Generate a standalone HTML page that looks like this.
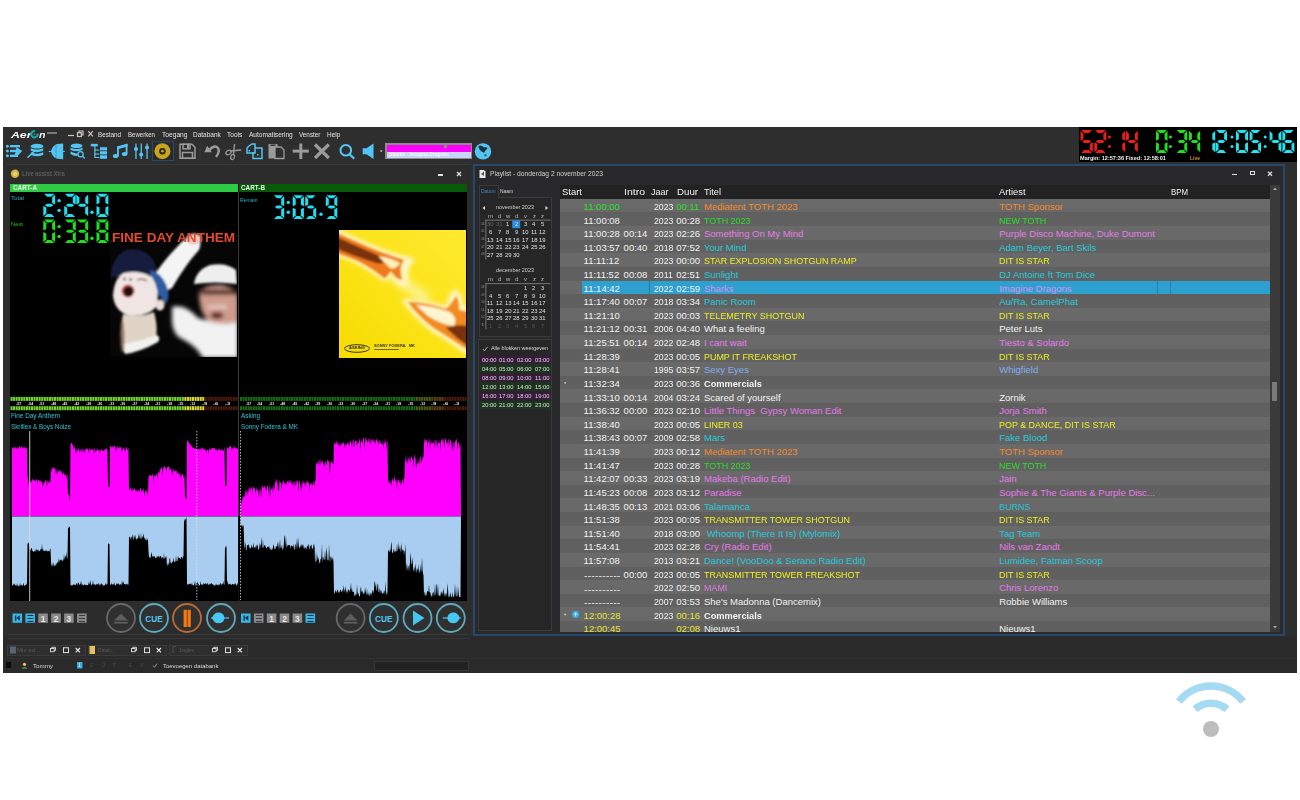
<!DOCTYPE html>
<html><head><meta charset="utf-8"><title>Aeron</title>
<style>
*{margin:0;padding:0;box-sizing:border-box}
html,body{width:1300px;height:800px;background:#fff;overflow:hidden;font-family:"Liberation Sans", sans-serif}
.a{position:absolute}
.t{position:absolute;white-space:pre;line-height:1}
svg{position:absolute;overflow:visible}
</style></head><body>

<div class="a" style="left:2.5px;top:127px;width:1294.5px;height:546px;background:#2e2e2e"></div>
<div class="t" style="left:10.50px;top:129.67px;font-size:9.60px;color:#f4f4f4;font-weight:bold;font-style:italic;transform:scaleX(1.2806);transform-origin:0 0;">Aer</div>
<svg style="left:0;top:0" width="1" height="1"><path d="M37.65 133.64 A3.2 3.2 0 1 1 35.06 131.05" fill="none" stroke="#1aa5a0" stroke-width="2.1"/><circle cx="34.5" cy="134.2" r="0.9" fill="#1aa5a0"/></svg>
<div class="t" style="left:38.60px;top:130.17px;font-size:9.60px;color:#f4f4f4;font-weight:bold;font-style:italic;transform:scaleX(1.1084);transform-origin:0 0;">n</div>
<div class="a" style="left:46.5px;top:132.2px;width:10.5px;height:2px;background:#777"></div>
<svg style="left:0;top:0" width="1" height="1"><g stroke="#c8c8c8" stroke-width="1.2" fill="none"><line x1="68" y1="135.5" x2="74" y2="135.5"/><rect x="77.5" y="132.7" width="3.8" height="3.8"/><polyline points="79,132.5 79,131 83,131 83,135 81.5,135"/><line x1="88.2" y1="131.2" x2="92.8" y2="136.3"/><line x1="92.8" y1="131.2" x2="88.2" y2="136.3"/></g></svg>
<div class="t" style="left:97.70px;top:130.69px;font-size:7.50px;color:#e2e2e2;transform:scaleX(0.8394);transform-origin:0 0;">Bestand</div>
<div class="t" style="left:127.70px;top:130.69px;font-size:7.50px;color:#e2e2e2;transform:scaleX(0.8066);transform-origin:0 0;">Bewerken</div>
<div class="t" style="left:161.50px;top:130.69px;font-size:7.50px;color:#e2e2e2;transform:scaleX(0.8861);transform-origin:0 0;">Toegang</div>
<div class="t" style="left:192.80px;top:130.69px;font-size:7.50px;color:#e2e2e2;transform:scaleX(0.8659);transform-origin:0 0;">Databank</div>
<div class="t" style="left:226.80px;top:130.69px;font-size:7.50px;color:#e2e2e2;transform:scaleX(0.8681);transform-origin:0 0;">Tools</div>
<div class="t" style="left:249.00px;top:130.69px;font-size:7.50px;color:#e2e2e2;transform:scaleX(0.8736);transform-origin:0 0;">Automatisering</div>
<div class="t" style="left:299.40px;top:130.69px;font-size:7.50px;color:#e2e2e2;transform:scaleX(0.8414);transform-origin:0 0;">Venster</div>
<div class="t" style="left:327.20px;top:130.69px;font-size:7.50px;color:#e2e2e2;transform:scaleX(0.8622);transform-origin:0 0;">Help</div>
<svg style="left:0;top:0" width="1" height="1"><g fill="#52c5f2"><circle cx="7.4" cy="146.2" r="1.5"/><rect x="10" y="145.0" width="10.0" height="2.4"/><circle cx="7.4" cy="151.0" r="1.5"/><rect x="10" y="149.8" width="9.0" height="2.4"/><circle cx="7.4" cy="155.8" r="1.5"/><rect x="10" y="154.6" width="8.0" height="2.4"/><path d="M16.5 147.3 L22.3 151 L16.5 157 L14.8 157 L14.8 155 Z"/></g><g fill="#52c5f2"><ellipse cx="37" cy="146.2" rx="6.2" ry="2.4"/><path d="M30.8 148.2 Q37 151 43.2 148.2 L43.2 150.8 Q37 153.6 30.8 150.8Z"/><path d="M30.8 152.3 Q37 155.1 43.2 152.3 L43.2 154.9 Q37 157.7 30.8 154.9Z"/></g><line x1="27.5" y1="157.8" x2="35" y2="150.5" stroke="#52c5f2" stroke-width="1.6"/><g fill="#52c5f2"><path d="M51 151.4 Q52.5 145.5 57 144 L63.2 143.6 L63.2 159.3 L57 158.8 Q52.5 157.3 51 151.4Z"/><rect x="48.7" y="150.9" width="16.2" height="1"/></g><rect x="55.6" y="145" width="0.8" height="13" fill="#2a6a8a" opacity="0.6"/><g fill="#52c5f2"><ellipse cx="76.5" cy="145.8" rx="6" ry="2.3"/><path d="M70.5 147.7 Q76.5 150.3 82.5 147.7 L82.5 150 Q76.5 152.6 70.5 150Z"/><path d="M70.5 151.5 Q76 154 78 153.5 L77.5 156 Q74 156.5 70.5 154Z"/></g><circle cx="80.6" cy="154.3" r="2.6" fill="none" stroke="#52c5f2" stroke-width="1.3"/><line x1="82.5" y1="156.2" x2="84.8" y2="158.5" stroke="#52c5f2" stroke-width="1.3"/><g fill="#52c5f2"><rect x="90.8" y="143.8" width="7" height="2.6"/><rect x="94.3" y="146" width="1.2" height="11"/><rect x="94.3" y="149.5" width="5" height="1.1"/><rect x="94.3" y="153.5" width="5" height="1.1"/><rect x="94.3" y="156.9" width="5" height="1.1"/><rect x="100" y="147.2" width="7" height="3.2"/><rect x="100" y="151.2" width="7" height="3.2"/><rect x="100" y="155.2" width="7" height="3.6"/></g><g fill="#52c5f2"><ellipse cx="115.6" cy="156" rx="2.8" ry="2.1"/><ellipse cx="124.6" cy="154" rx="2.8" ry="2.1"/><rect x="117" y="146.5" width="1.9" height="10"/><rect x="125.6" y="144" width="1.9" height="10"/><path d="M117 146.5 L127.5 143.5 L127.5 146.5 L117 149.5Z"/></g><g fill="#52c5f2"><rect x="135.3" y="143.5" width="1.3" height="15.5"/><rect x="140.6" y="143.5" width="1.3" height="15.5"/><rect x="146.4" y="143.5" width="1.3" height="15.5"/><circle cx="136" cy="149" r="2"/><circle cx="141.2" cy="154.5" r="2"/><circle cx="147" cy="147.5" r="2"/></g><rect x="152.5" y="141.7" width="21" height="18.8" fill="#262a2e" stroke="#2c4a62" stroke-width="1"/><circle cx="162.4" cy="151.2" r="8" fill="#c9a21f"/><circle cx="162.4" cy="151.2" r="3.2" fill="#2a2410"/><circle cx="162.4" cy="151.2" r="1.4" fill="#c9a21f"/><g fill="none" stroke="#9b9b9b" stroke-width="1.5"><path d="M180 144.3 H192 L195 147.3 V158.3 H180 Z"/><rect x="183" y="144.3" width="7" height="4.5"/><rect x="182.5" y="152.5" width="10" height="5.8"/></g><rect x="187" y="145" width="2" height="3" fill="#9b9b9b"/><rect x="199.5" y="143" width="1" height="17" fill="#3a3a3a"/><path d="M209 150.5 Q213 145 217 147 Q221 150 216 157" fill="none" stroke="#9b9b9b" stroke-width="2.4"/><path d="M204.3 152.2 L207.2 145.7 L211.8 152.2 Z" fill="#9b9b9b"/><g fill="none" stroke="#9b9b9b" stroke-width="1.3"><ellipse cx="228.5" cy="152.5" rx="2.8" ry="2" transform="rotate(-30 228.5 152.5)"/><ellipse cx="232.6" cy="157" rx="1.8" ry="2.6" transform="rotate(20 232.6 157)"/><line x1="230.8" y1="151" x2="241" y2="150"/><line x1="233.5" y1="154.5" x2="234.5" y2="144"/></g><g fill="none" stroke="#52c5f2" stroke-width="1.5"><path d="M249 146 L252 144 H255 V153 H247 V148 Z"/><path d="M255 148 H262 V158.5 H253 V152"/></g><rect x="248.5" y="150" width="1.5" height="1.5" fill="#52c5f2"/><rect x="257" y="154" width="1.5" height="1.5" fill="#52c5f2"/><g fill="#9b9b9b"><rect x="268.5" y="144" width="9" height="14.5"/></g><path d="M275 147 H281 L284 150 V158.5 H275 Z" fill="#2e2e2e" stroke="#9b9b9b" stroke-width="1.3"/><rect x="270.5" y="144.5" width="5" height="1.4" fill="#2e2e2e"/><rect x="292.7" y="149.6" width="16.1" height="3" fill="#9b9b9b"/><rect x="299.3" y="143.5" width="3" height="15.5" fill="#9b9b9b"/><g stroke="#9b9b9b" stroke-width="3.2"><line x1="315" y1="144.5" x2="328.8" y2="158"/><line x1="328.8" y1="144.5" x2="315" y2="158"/></g><circle cx="345.8" cy="150.3" r="5.3" fill="none" stroke="#52c5f2" stroke-width="2"/><line x1="349.5" y1="154.2" x2="354.2" y2="158.6" stroke="#52c5f2" stroke-width="2.2"/><path d="M362.7 148.3 H366.5 L373.5 143.5 V159 L366.5 154.2 H362.7 Z" fill="#52c5f2"/><path d="M379.8 150.6 H382.6 L381.2 152.3Z" fill="#ddd"/></svg>
<div class="a" style="left:385px;top:143px;width:87px;height:15.8px;background:#8c8c8c"></div>
<div class="a" style="left:386.5px;top:144.5px;width:84px;height:7.5px;background:#ff00ff"></div>
<div class="a" style="left:444.2px;top:144.5px;width:3.3px;height:3.5px;background:#8c8c8c"></div>
<div class="a" style="left:386.5px;top:152px;width:84px;height:5.5px;background:#c8d4f8"></div>
<div class="t" style="left:388.50px;top:152.20px;font-size:5.60px;color:#f4f8ff;font-weight:bold;transform:scaleX(0.8685);transform-origin:0 0;">Sharks - Imagine Dragons</div>
<svg style="left:0;top:0" width="1" height="1"><circle cx="483" cy="151.4" r="8.2" fill="#52c5f2"/><path d="M478.5 146 Q481 144.5 484 147.5 Q486.5 146 487.5 148.5 L485 151 Q484.5 154 482.5 152 Q479 150.5 478.5 146Z" fill="#1f3040"/><circle cx="485.5" cy="155.2" r="1" fill="#1f3040"/></svg>
<div class="a" style="left:1079px;top:127px;width:218px;height:35px;background:#000"></div>
<svg style="left:0;top:0" width="1" height="1"><g fill="#ee1c1c"><polygon points="1081.25,130.00 1092.05,130.00 1089.15,132.90 1084.15,132.90"/><polygon points="1080.50,130.75 1083.40,133.65 1083.40,139.30 1080.50,140.75"/><polygon points="1082.12,141.50 1084.15,140.05 1089.15,140.05 1091.18,141.50 1089.15,142.95 1084.15,142.95"/><polygon points="1092.80,142.25 1089.90,143.70 1089.90,149.35 1092.80,152.25"/><polygon points="1084.15,150.10 1089.15,150.10 1092.05,153.00 1081.25,153.00"/><polygon points="1095.05,130.00 1105.55,130.00 1102.65,132.90 1097.95,132.90"/><polygon points="1106.30,130.75 1103.40,133.65 1103.40,139.30 1106.30,140.75"/><polygon points="1095.92,141.50 1097.95,140.05 1102.65,140.05 1104.68,141.50 1102.65,142.95 1097.95,142.95"/><polygon points="1094.30,142.25 1097.20,143.70 1097.20,149.35 1094.30,152.25"/><polygon points="1097.95,150.10 1102.65,150.10 1105.55,153.00 1095.05,153.00"/><circle cx="1109.50" cy="136.90" r="1.50"/><circle cx="1109.50" cy="146.56" r="1.50"/><polygon points="1125.20,130.75 1122.30,133.65 1122.30,139.30 1125.20,140.75"/><polygon points="1125.20,142.25 1122.30,143.70 1122.30,149.35 1125.20,152.25"/><polygon points="1126.00,130.75 1128.90,133.65 1128.90,139.30 1126.00,140.75"/><polygon points="1127.62,141.50 1129.65,140.05 1134.15,140.05 1136.18,141.50 1134.15,142.95 1129.65,142.95"/><polygon points="1137.80,130.75 1134.90,133.65 1134.90,139.30 1137.80,140.75"/><polygon points="1137.80,142.25 1134.90,143.70 1134.90,149.35 1137.80,152.25"/></g><g fill="#1fe01f"><polygon points="1156.75,130.00 1166.75,130.00 1163.85,132.90 1159.65,132.90"/><polygon points="1167.50,130.75 1164.60,133.65 1164.60,139.30 1167.50,140.75"/><polygon points="1167.50,142.25 1164.60,143.70 1164.60,149.35 1167.50,152.25"/><polygon points="1159.65,150.10 1163.85,150.10 1166.75,153.00 1156.75,153.00"/><polygon points="1156.00,142.25 1158.90,143.70 1158.90,149.35 1156.00,152.25"/><polygon points="1156.00,130.75 1158.90,133.65 1158.90,139.30 1156.00,140.75"/><circle cx="1170.50" cy="136.90" r="1.50"/><circle cx="1170.50" cy="146.56" r="1.50"/><polygon points="1176.75,130.00 1186.45,130.00 1183.55,132.90 1179.65,132.90"/><polygon points="1187.20,130.75 1184.30,133.65 1184.30,139.30 1187.20,140.75"/><polygon points="1177.62,141.50 1179.65,140.05 1183.55,140.05 1185.58,141.50 1183.55,142.95 1179.65,142.95"/><polygon points="1187.20,142.25 1184.30,143.70 1184.30,149.35 1187.20,152.25"/><polygon points="1179.65,150.10 1183.55,150.10 1186.45,153.00 1176.75,153.00"/><polygon points="1189.00,130.75 1191.90,133.65 1191.90,139.30 1189.00,140.75"/><polygon points="1190.62,141.50 1192.65,140.05 1196.55,140.05 1198.58,141.50 1196.55,142.95 1192.65,142.95"/><polygon points="1200.20,130.75 1197.30,133.65 1197.30,139.30 1200.20,140.75"/><polygon points="1200.20,142.25 1197.30,143.70 1197.30,149.35 1200.20,152.25"/></g><g fill="#22e4ee"><polygon points="1215.20,130.75 1212.30,133.65 1212.30,139.30 1215.20,140.75"/><polygon points="1215.20,142.25 1212.30,143.70 1212.30,149.35 1215.20,152.25"/><polygon points="1216.35,130.00 1226.25,130.00 1223.35,132.90 1219.25,132.90"/><polygon points="1227.00,130.75 1224.10,133.65 1224.10,139.30 1227.00,140.75"/><polygon points="1217.22,141.50 1219.25,140.05 1223.35,140.05 1225.38,141.50 1223.35,142.95 1219.25,142.95"/><polygon points="1215.60,142.25 1218.50,143.70 1218.50,149.35 1215.60,152.25"/><polygon points="1219.25,150.10 1223.35,150.10 1226.25,153.00 1216.35,153.00"/><circle cx="1232.00" cy="136.90" r="1.50"/><circle cx="1232.00" cy="146.56" r="1.50"/><polygon points="1236.75,130.00 1247.25,130.00 1244.35,132.90 1239.65,132.90"/><polygon points="1248.00,130.75 1245.10,133.65 1245.10,139.30 1248.00,140.75"/><polygon points="1248.00,142.25 1245.10,143.70 1245.10,149.35 1248.00,152.25"/><polygon points="1239.65,150.10 1244.35,150.10 1247.25,153.00 1236.75,153.00"/><polygon points="1236.00,142.25 1238.90,143.70 1238.90,149.35 1236.00,152.25"/><polygon points="1236.00,130.75 1238.90,133.65 1238.90,139.30 1236.00,140.75"/><polygon points="1250.35,130.00 1260.25,130.00 1257.35,132.90 1253.25,132.90"/><polygon points="1249.60,130.75 1252.50,133.65 1252.50,139.30 1249.60,140.75"/><polygon points="1251.22,141.50 1253.25,140.05 1257.35,140.05 1259.38,141.50 1257.35,142.95 1253.25,142.95"/><polygon points="1261.00,142.25 1258.10,143.70 1258.10,149.35 1261.00,152.25"/><polygon points="1253.25,150.10 1257.35,150.10 1260.25,153.00 1250.35,153.00"/><circle cx="1265.20" cy="136.90" r="1.50"/><circle cx="1265.20" cy="146.56" r="1.50"/><polygon points="1269.60,130.75 1272.50,133.65 1272.50,139.30 1269.60,140.75"/><polygon points="1271.22,141.50 1273.25,140.05 1277.75,140.05 1279.78,141.50 1277.75,142.95 1273.25,142.95"/><polygon points="1281.40,130.75 1278.50,133.65 1278.50,139.30 1281.40,140.75"/><polygon points="1281.40,142.25 1278.50,143.70 1278.50,149.35 1281.40,152.25"/><polygon points="1283.15,130.00 1293.65,130.00 1290.75,132.90 1286.05,132.90"/><polygon points="1282.40,130.75 1285.30,133.65 1285.30,139.30 1282.40,140.75"/><polygon points="1284.02,141.50 1286.05,140.05 1290.75,140.05 1292.78,141.50 1290.75,142.95 1286.05,142.95"/><polygon points="1282.40,142.25 1285.30,143.70 1285.30,149.35 1282.40,152.25"/><polygon points="1294.40,142.25 1291.50,143.70 1291.50,149.35 1294.40,152.25"/><polygon points="1286.05,150.10 1290.75,150.10 1293.65,153.00 1283.15,153.00"/></g></svg>
<div class="t" style="left:1080.00px;top:156.30px;font-size:5.60px;color:#f0f0f0;font-weight:bold;transform:scaleX(0.9975);transform-origin:0 0;">Margin: 12:57:36 Fixed: 12:58:01</div>
<div class="t" style="left:1190.00px;top:156.30px;font-size:5.60px;color:#d09030;font-weight:bold;transform:scaleX(0.8924);transform-origin:0 0;">Live</div>
<div class="a" style="left:7px;top:165px;width:464px;height:475px;background:#2c2c2c"></div>
<div class="a" style="left:7px;top:164.2px;width:464px;height:1px;background:#3a3a3a"></div>
<svg style="left:0;top:0" width="1" height="1"><circle cx="15" cy="173.7" r="4.2" fill="#d4b040"/><circle cx="15" cy="173.7" r="2.2" fill="#e8d070"/></svg>
<div class="t" style="left:21.80px;top:169.94px;font-size:8.00px;color:#5c5c5c;font-weight:bold;transform:scaleX(0.7291);transform-origin:0 0;">Live assist Xtra</div>
<div class="a" style="left:438px;top:174px;width:4.5px;height:1.8px;background:#e0e0e0"></div>
<svg style="left:0;top:0" width="1" height="1"><g stroke="#dcdcdc" stroke-width="1.3"><line x1="457" y1="172" x2="461" y2="176"/><line x1="461" y1="172" x2="457" y2="176"/></g></svg>
<div class="a" style="left:10px;top:184px;width:457px;height:417px;background:#000"></div>
<div class="a" style="left:238px;top:192px;width:1px;height:409px;background:#3c3c3c"></div>
<div class="a" style="left:10px;top:184px;width:228px;height:8px;background:#2fcb45"></div>
<div class="a" style="left:239px;top:184px;width:228px;height:8px;background:#085a09"></div>
<div class="t" style="left:12.50px;top:184.82px;font-size:6.60px;color:#f0fff0;font-weight:bold;transform:scaleX(0.9627);transform-origin:0 0;">CART-A</div>
<div class="t" style="left:241.00px;top:184.82px;font-size:6.60px;color:#e8f8e8;font-weight:bold;transform:scaleX(0.9627);transform-origin:0 0;">CART-B</div>
<div class="t" style="left:11.20px;top:194.81px;font-size:6.20px;color:#2fb0c8;transform:scaleX(0.9926);transform-origin:0 0;">Total</div>
<div class="t" style="left:11.20px;top:220.81px;font-size:6.20px;color:#22c822;transform:scaleX(0.9413);transform-origin:0 0;">Next</div>
<div class="t" style="left:240.40px;top:197.21px;font-size:6.20px;color:#2fb0c8;transform:scaleX(0.8191);transform-origin:0 0;">Remain</div>
<svg style="left:0;top:0" width="1" height="1"><g fill="#22dff0"><polygon points="44.05,193.70 54.35,193.70 51.35,196.70 47.05,196.70"/><polygon points="55.10,194.45 52.10,197.45 52.10,203.05 55.10,204.55"/><polygon points="44.95,205.30 47.05,203.80 51.35,203.80 53.45,205.30 51.35,206.80 47.05,206.80"/><polygon points="43.30,206.05 46.30,207.55 46.30,213.15 43.30,216.15"/><polygon points="47.05,213.90 51.35,213.90 54.35,216.90 44.05,216.90"/><circle cx="59.10" cy="200.66" r="1.70"/><circle cx="59.10" cy="210.40" r="1.70"/><polygon points="64.95,193.70 75.05,193.70 72.05,196.70 67.95,196.70"/><polygon points="75.80,194.45 72.80,197.45 72.80,203.05 75.80,204.55"/><polygon points="65.85,205.30 67.95,203.80 72.05,203.80 74.15,205.30 72.05,206.80 67.95,206.80"/><polygon points="64.20,206.05 67.20,207.55 67.20,213.15 64.20,216.15"/><polygon points="67.95,213.90 72.05,213.90 75.05,216.90 64.95,216.90"/><polygon points="76.40,194.45 79.40,197.45 79.40,203.05 76.40,204.55"/><polygon points="78.05,205.30 80.15,203.80 84.45,203.80 86.55,205.30 84.45,206.80 80.15,206.80"/><polygon points="88.20,194.45 85.20,197.45 85.20,203.05 88.20,204.55"/><polygon points="88.20,206.05 85.20,207.55 85.20,213.15 88.20,216.15"/><circle cx="92.00" cy="212.26" r="1.70"/><polygon points="97.25,193.70 107.65,193.70 104.65,196.70 100.25,196.70"/><polygon points="108.40,194.45 105.40,197.45 105.40,203.05 108.40,204.55"/><polygon points="108.40,206.05 105.40,207.55 105.40,213.15 108.40,216.15"/><polygon points="100.25,213.90 104.65,213.90 107.65,216.90 97.25,216.90"/><polygon points="96.50,206.05 99.50,207.55 99.50,213.15 96.50,216.15"/><polygon points="96.50,194.45 99.50,197.45 99.50,203.05 96.50,204.55"/></g><g fill="#1fe01f"><polygon points="44.05,219.60 54.35,219.60 51.35,222.60 47.05,222.60"/><polygon points="55.10,220.35 52.10,223.35 52.10,229.05 55.10,230.55"/><polygon points="55.10,232.05 52.10,233.55 52.10,239.25 55.10,242.25"/><polygon points="47.05,240.00 51.35,240.00 54.35,243.00 44.05,243.00"/><polygon points="43.30,232.05 46.30,233.55 46.30,239.25 43.30,242.25"/><polygon points="43.30,220.35 46.30,223.35 46.30,229.05 43.30,230.55"/><circle cx="59.10" cy="226.62" r="1.70"/><circle cx="59.10" cy="236.45" r="1.70"/><polygon points="64.95,219.60 75.05,219.60 72.05,222.60 67.95,222.60"/><polygon points="75.80,220.35 72.80,223.35 72.80,229.05 75.80,230.55"/><polygon points="65.85,231.30 67.95,229.80 72.05,229.80 74.15,231.30 72.05,232.80 67.95,232.80"/><polygon points="75.80,232.05 72.80,233.55 72.80,239.25 75.80,242.25"/><polygon points="67.95,240.00 72.05,240.00 75.05,243.00 64.95,243.00"/><polygon points="77.15,219.60 87.45,219.60 84.45,222.60 80.15,222.60"/><polygon points="88.20,220.35 85.20,223.35 85.20,229.05 88.20,230.55"/><polygon points="78.05,231.30 80.15,229.80 84.45,229.80 86.55,231.30 84.45,232.80 80.15,232.80"/><polygon points="88.20,232.05 85.20,233.55 85.20,239.25 88.20,242.25"/><polygon points="80.15,240.00 84.45,240.00 87.45,243.00 77.15,243.00"/><circle cx="92.00" cy="238.32" r="1.70"/><polygon points="97.25,219.60 107.65,219.60 104.65,222.60 100.25,222.60"/><polygon points="108.40,220.35 105.40,223.35 105.40,229.05 108.40,230.55"/><polygon points="108.40,232.05 105.40,233.55 105.40,239.25 108.40,242.25"/><polygon points="100.25,240.00 104.65,240.00 107.65,243.00 97.25,243.00"/><polygon points="96.50,232.05 99.50,233.55 99.50,239.25 96.50,242.25"/><polygon points="96.50,220.35 99.50,223.35 99.50,229.05 96.50,230.55"/><polygon points="98.15,231.30 100.25,229.80 104.65,229.80 106.75,231.30 104.65,232.80 100.25,232.80"/></g><g fill="#22dff0"><polygon points="273.95,195.30 283.45,195.30 280.45,198.30 276.95,198.30"/><polygon points="284.20,196.05 281.20,199.05 281.20,204.85 284.20,206.35"/><polygon points="274.85,207.10 276.95,205.60 280.45,205.60 282.55,207.10 280.45,208.60 276.95,208.60"/><polygon points="284.20,207.85 281.20,209.35 281.20,215.15 284.20,218.15"/><polygon points="276.95,215.90 280.45,215.90 283.45,218.90 273.95,218.90"/><circle cx="288.30" cy="202.38" r="1.70"/><circle cx="288.30" cy="212.29" r="1.70"/><polygon points="293.45,195.30 303.15,195.30 300.15,198.30 296.45,198.30"/><polygon points="303.90,196.05 300.90,199.05 300.90,204.85 303.90,206.35"/><polygon points="303.90,207.85 300.90,209.35 300.90,215.15 303.90,218.15"/><polygon points="296.45,215.90 300.15,215.90 303.15,218.90 293.45,218.90"/><polygon points="292.70,207.85 295.70,209.35 295.70,215.15 292.70,218.15"/><polygon points="292.70,196.05 295.70,199.05 295.70,204.85 292.70,206.35"/><polygon points="305.95,195.30 315.45,195.30 312.45,198.30 308.95,198.30"/><polygon points="305.20,196.05 308.20,199.05 308.20,204.85 305.20,206.35"/><polygon points="306.85,207.10 308.95,205.60 312.45,205.60 314.55,207.10 312.45,208.60 308.95,208.60"/><polygon points="316.20,207.85 313.20,209.35 313.20,215.15 316.20,218.15"/><polygon points="308.95,215.90 312.45,215.90 315.45,218.90 305.95,218.90"/><circle cx="321.00" cy="214.18" r="1.70"/><polygon points="326.55,195.30 336.55,195.30 333.55,198.30 329.55,198.30"/><polygon points="337.30,196.05 334.30,199.05 334.30,204.85 337.30,206.35"/><polygon points="337.30,207.85 334.30,209.35 334.30,215.15 337.30,218.15"/><polygon points="329.55,215.90 333.55,215.90 336.55,218.90 326.55,218.90"/><polygon points="325.80,196.05 328.80,199.05 328.80,204.85 325.80,206.35"/><polygon points="327.45,207.10 329.55,205.60 333.55,205.60 335.65,207.10 333.55,208.60 329.55,208.60"/></g></svg>
<svg style="left:110px;top:230px" width="127" height="127" viewBox="110 230 127 127">
<defs>
<filter id="bl1" x="-30%" y="-30%" width="160%" height="160%"><feGaussianBlur stdDeviation="1"/></filter>
<filter id="bl2" x="-30%" y="-30%" width="160%" height="160%"><feGaussianBlur stdDeviation="2.2"/></filter>
<clipPath id="cA"><rect x="110" y="230" width="127" height="127"/></clipPath>
</defs>
<g clip-path="url(#cA)">
<rect x="110" y="230" width="127" height="127" fill="#060606"/>
<g filter="url(#bl2)">
<path d="M172 307 Q185 303 198 318 Q215 324 238 318 L238 358 L203 358 Q196 346 184 340 Q173 336 172 322Z" fill="#f2f2f2"/>
<path d="M199 292 Q205 284 222 285 Q238 288 238 300 L238 322 Q226 326 210 322 Q199 314 199 292Z" fill="#cf9c8c"/>
<rect x="200" y="289" width="38" height="6" fill="#3a1a18" opacity="0.8"/>
<ellipse cx="217" cy="315.5" rx="6.5" ry="3.5" fill="#5a1414"/>
<rect x="208" y="305.5" width="19" height="3" fill="#f0dcdc" opacity="0.8"/>
</g>
<g filter="url(#bl1)">
<path d="M194 284 Q196 270 210 265 Q226 262 236 270 L237 284 Q215 281 194 284Z" fill="#eeeeee"/>
<path d="M150 282 Q162 262 178 246 Q186 236 196 236 Q203 240 199 250 Q186 264 172 288 Q160 296 150 282Z" fill="#f4f4f4"/>
<ellipse cx="194" cy="239" rx="8" ry="5.5" fill="#ecc8c0"/>
<path d="M111 274 Q112 257 126 250 Q142 247 152 258 Q158 268 156 276 Q135 270 111 278Z" fill="#161c3c"/>
<path d="M150 270 Q160 272 166 284 Q171 296 166 304 Q160 296 152 288Z" fill="#2d5ba2"/>
<path d="M113 296 Q114 278 124 273 Q140 270 152 277 Q160 290 157 305 Q152 315 132 316 Q115 313 113 296Z" fill="#efe6e3"/>
<ellipse cx="160" cy="305" rx="4.5" ry="5.5" fill="#e6dcd8"/>
<path d="M123 314 Q140 318 154 312 Q158 326 156 338 Q140 350 124 352 Q119 332 123 314Z" fill="#e0d4c6"/>
<path d="M121 344 Q140 342 157 335 Q161 338 158 342 Q140 352 125 354Z" fill="#f2f2f0"/>
<path d="M122 316 Q126 330 124 352 L121 352 Q118 332 122 316Z" fill="#7a5a48" opacity="0.7"/>
<ellipse cx="128" cy="291" rx="6.5" ry="6.5" fill="#b84848"/>
<ellipse cx="128.5" cy="291.5" rx="4.8" ry="5" fill="#240808"/>
<circle cx="124.5" cy="279" r="1.2" fill="#402828"/><circle cx="130.5" cy="279.5" r="1.2" fill="#402828"/>
<path d="M137 280 Q143 278 147 281" stroke="#704040" stroke-width="1.2" fill="none"/>
</g>
</g>
</svg>
<div class="t" style="left:111.80px;top:232.32px;font-size:12.20px;color:#e04a30;font-weight:bold;transform:scaleX(1.1127);transform-origin:0 0;">FINE DAY ANTHEM</div>
<svg style="left:339px;top:230px" width="127" height="128" viewBox="339 230 127 128">
<defs>
<linearGradient id="yg" x1="0" y1="1" x2="1" y2="0"><stop offset="0" stop-color="#f7dc00"/><stop offset="1" stop-color="#ffea30"/></linearGradient>
<filter id="bb1" x="-30%" y="-30%" width="160%" height="160%"><feGaussianBlur stdDeviation="1.1"/></filter>
<filter id="bb2" x="-30%" y="-30%" width="160%" height="160%"><feGaussianBlur stdDeviation="2"/></filter>
<filter id="bb3" x="-50%" y="-50%" width="200%" height="200%"><feGaussianBlur stdDeviation="4"/></filter>
<clipPath id="cB"><rect x="339" y="230" width="127" height="128"/></clipPath>
</defs>
<g clip-path="url(#cB)">
<rect x="339" y="230" width="127" height="128" fill="url(#yg)"/>
<path d="M388 272 L428 300" stroke="#fff6b0" stroke-width="10" fill="none" filter="url(#bb3)" opacity="0.9"/>
<g filter="url(#bb2)">
<path d="M337 229 L366 242 Q390 253 413 258 Q416 264 410 265 Q408 276 407 285 Q400 288 398 284 Q392 276 390 275 Q386 282 383 281 Q372 272 357 264 Q347 258 337 257Z" fill="#fff4c0"/>
<path d="M402 299 Q420 298 446 306 Q448 296 454 289 Q462 291 463 305 Q466 306 468 307 L468 356 Q450 342 432 332 Q414 318 402 301Z" fill="#fff4c0"/>
</g>
<g filter="url(#bb1)">
<path d="M337 233 Q352 240 368 247 Q390 256 404 260 Q398 266 402 280 Q395 278 391 271 Q386 278 384 278 Q372 268 358 261 Q346 256 337 253Z" fill="#ee7a1a"/>
<path d="M337 237 Q352 244 366 250 Q378 255 386 259 Q384 265 376 263 Q354 256 337 249Z" fill="#7a3008"/>
<path d="M378 256 Q392 258 400 263 Q396 270 390 268 Q384 262 378 256Z" fill="#fff0b8"/>
<path d="M408 302 Q424 302 446 309 Q452 304 456 296 Q459 300 459 310 L468 312 L468 350 Q450 338 434 328 Q418 316 408 302Z" fill="#f38a20"/>
<path d="M416 305 Q432 306 450 312 Q458 318 454 326 Q440 324 428 316Z" fill="#fff6d0"/>
<path d="M468 326 Q456 324 446 328 Q456 338 468 346Z" fill="#7a3008"/>
</g>
<ellipse cx="357" cy="348.5" rx="12.5" ry="3.8" fill="none" stroke="#222" stroke-width="0.9"/>
</g>
</svg>
<div class="t" style="left:348.50px;top:347.06px;font-size:3.20px;color:#222;font-weight:bold;transform:scaleX(1.2856);transform-origin:0 0;">ASKING</div>
<div class="t" style="left:373.50px;top:345.46px;font-size:3.20px;color:#333;font-weight:bold;transform:scaleX(1.2332);transform-origin:0 0;">SONNY FODERA   MK</div>
<div class="a" style="left:373.5px;top:349.3px;width:25px;height:0.8px;background:#6a6a30"></div>
<svg style="left:0;top:0" width="1" height="1"><rect x="10.50" y="396.9" width="2.11" height="4" fill="#74d42e"/><rect x="13.06" y="396.9" width="2.11" height="4" fill="#74d42e"/><rect x="15.61" y="396.9" width="2.11" height="4" fill="#74d42e"/><rect x="18.17" y="396.9" width="2.11" height="4" fill="#74d42e"/><rect x="20.72" y="396.9" width="2.11" height="4" fill="#74d42e"/><rect x="23.28" y="396.9" width="2.11" height="4" fill="#74d42e"/><rect x="25.84" y="396.9" width="2.11" height="4" fill="#74d42e"/><rect x="28.39" y="396.9" width="2.11" height="4" fill="#74d42e"/><rect x="30.95" y="396.9" width="2.11" height="4" fill="#74d42e"/><rect x="33.51" y="396.9" width="2.11" height="4" fill="#74d42e"/><rect x="36.06" y="396.9" width="2.11" height="4" fill="#74d42e"/><rect x="38.62" y="396.9" width="2.11" height="4" fill="#74d42e"/><rect x="41.17" y="396.9" width="2.11" height="4" fill="#74d42e"/><rect x="43.73" y="396.9" width="2.11" height="4" fill="#74d42e"/><rect x="46.29" y="396.9" width="2.11" height="4" fill="#74d42e"/><rect x="48.84" y="396.9" width="2.11" height="4" fill="#74d42e"/><rect x="51.40" y="396.9" width="2.11" height="4" fill="#74d42e"/><rect x="53.96" y="396.9" width="2.11" height="4" fill="#74d42e"/><rect x="56.51" y="396.9" width="2.11" height="4" fill="#74d42e"/><rect x="59.07" y="396.9" width="2.11" height="4" fill="#74d42e"/><rect x="61.62" y="396.9" width="2.11" height="4" fill="#74d42e"/><rect x="64.18" y="396.9" width="2.11" height="4" fill="#74d42e"/><rect x="66.74" y="396.9" width="2.11" height="4" fill="#74d42e"/><rect x="69.29" y="396.9" width="2.11" height="4" fill="#74d42e"/><rect x="71.85" y="396.9" width="2.11" height="4" fill="#74d42e"/><rect x="74.40" y="396.9" width="2.11" height="4" fill="#74d42e"/><rect x="76.96" y="396.9" width="2.11" height="4" fill="#74d42e"/><rect x="79.52" y="396.9" width="2.11" height="4" fill="#74d42e"/><rect x="82.07" y="396.9" width="2.11" height="4" fill="#74d42e"/><rect x="84.63" y="396.9" width="2.11" height="4" fill="#74d42e"/><rect x="87.19" y="396.9" width="2.11" height="4" fill="#74d42e"/><rect x="89.74" y="396.9" width="2.11" height="4" fill="#74d42e"/><rect x="92.30" y="396.9" width="2.11" height="4" fill="#74d42e"/><rect x="94.85" y="396.9" width="2.11" height="4" fill="#74d42e"/><rect x="97.41" y="396.9" width="2.11" height="4" fill="#74d42e"/><rect x="99.97" y="396.9" width="2.11" height="4" fill="#74d42e"/><rect x="102.52" y="396.9" width="2.11" height="4" fill="#74d42e"/><rect x="105.08" y="396.9" width="2.11" height="4" fill="#74d42e"/><rect x="107.63" y="396.9" width="2.11" height="4" fill="#74d42e"/><rect x="110.19" y="396.9" width="2.11" height="4" fill="#74d42e"/><rect x="112.75" y="396.9" width="2.11" height="4" fill="#74d42e"/><rect x="115.30" y="396.9" width="2.11" height="4" fill="#74d42e"/><rect x="117.86" y="396.9" width="2.11" height="4" fill="#74d42e"/><rect x="120.42" y="396.9" width="2.11" height="4" fill="#74d42e"/><rect x="122.97" y="396.9" width="2.11" height="4" fill="#74d42e"/><rect x="125.53" y="396.9" width="2.11" height="4" fill="#74d42e"/><rect x="128.08" y="396.9" width="2.11" height="4" fill="#74d42e"/><rect x="130.64" y="396.9" width="2.11" height="4" fill="#74d42e"/><rect x="133.20" y="396.9" width="2.11" height="4" fill="#74d42e"/><rect x="135.75" y="396.9" width="2.11" height="4" fill="#74d42e"/><rect x="138.31" y="396.9" width="2.11" height="4" fill="#74d42e"/><rect x="140.87" y="396.9" width="2.11" height="4" fill="#74d42e"/><rect x="143.42" y="396.9" width="2.11" height="4" fill="#74d42e"/><rect x="145.98" y="396.9" width="2.11" height="4" fill="#74d42e"/><rect x="148.53" y="396.9" width="2.11" height="4" fill="#74d42e"/><rect x="151.09" y="396.9" width="2.11" height="4" fill="#74d42e"/><rect x="153.65" y="396.9" width="2.11" height="4" fill="#74d42e"/><rect x="156.20" y="396.9" width="2.11" height="4" fill="#74d42e"/><rect x="158.76" y="396.9" width="2.11" height="4" fill="#74d42e"/><rect x="161.31" y="396.9" width="2.11" height="4" fill="#74d42e"/><rect x="163.87" y="396.9" width="2.11" height="4" fill="#74d42e"/><rect x="166.43" y="396.9" width="2.11" height="4" fill="#74d42e"/><rect x="168.98" y="396.9" width="2.11" height="4" fill="#74d42e"/><rect x="171.54" y="396.9" width="2.11" height="4" fill="#74d42e"/><rect x="174.10" y="396.9" width="2.11" height="4" fill="#74d42e"/><rect x="176.65" y="396.9" width="2.11" height="4" fill="#74d42e"/><rect x="179.21" y="396.9" width="2.11" height="4" fill="#74d42e"/><rect x="181.76" y="396.9" width="2.11" height="4" fill="#74d42e"/><rect x="184.32" y="396.9" width="2.11" height="4" fill="#d8d83a"/><rect x="186.88" y="396.9" width="2.11" height="4" fill="#d8d83a"/><rect x="189.43" y="396.9" width="2.11" height="4" fill="#d8d83a"/><rect x="191.99" y="396.9" width="2.11" height="4" fill="#d8d83a"/><rect x="194.54" y="396.9" width="2.11" height="4" fill="#d8d83a"/><rect x="197.10" y="396.9" width="2.11" height="4" fill="#d8d83a"/><rect x="199.66" y="396.9" width="2.11" height="4" fill="#d8d83a"/><rect x="202.21" y="396.9" width="2.11" height="4" fill="#d8d83a"/><rect x="204.77" y="396.9" width="2.11" height="4" fill="#4a1a0c"/><rect x="207.33" y="396.9" width="2.11" height="4" fill="#4a1a0c"/><rect x="209.88" y="396.9" width="2.11" height="4" fill="#4a1a0c"/><rect x="212.44" y="396.9" width="2.11" height="4" fill="#4a1a0c"/><rect x="214.99" y="396.9" width="2.11" height="4" fill="#4a1a0c"/><rect x="217.55" y="396.9" width="2.11" height="4" fill="#4a1a0c"/><rect x="220.11" y="396.9" width="2.11" height="4" fill="#4a1a0c"/><rect x="222.66" y="396.9" width="2.11" height="4" fill="#4a1a0c"/><rect x="225.22" y="396.9" width="2.11" height="4" fill="#4a1a0c"/><rect x="227.78" y="396.9" width="2.11" height="4" fill="#4a1a0c"/><rect x="230.33" y="396.9" width="2.11" height="4" fill="#4a1a0c"/><rect x="232.89" y="396.9" width="2.11" height="4" fill="#4a1a0c"/><rect x="235.44" y="396.9" width="2.11" height="4" fill="#4a1a0c"/><rect x="10.50" y="406.2" width="2.11" height="4" fill="#74d42e"/><rect x="13.06" y="406.2" width="2.11" height="4" fill="#74d42e"/><rect x="15.61" y="406.2" width="2.11" height="4" fill="#74d42e"/><rect x="18.17" y="406.2" width="2.11" height="4" fill="#74d42e"/><rect x="20.72" y="406.2" width="2.11" height="4" fill="#74d42e"/><rect x="23.28" y="406.2" width="2.11" height="4" fill="#74d42e"/><rect x="25.84" y="406.2" width="2.11" height="4" fill="#74d42e"/><rect x="28.39" y="406.2" width="2.11" height="4" fill="#74d42e"/><rect x="30.95" y="406.2" width="2.11" height="4" fill="#74d42e"/><rect x="33.51" y="406.2" width="2.11" height="4" fill="#74d42e"/><rect x="36.06" y="406.2" width="2.11" height="4" fill="#74d42e"/><rect x="38.62" y="406.2" width="2.11" height="4" fill="#74d42e"/><rect x="41.17" y="406.2" width="2.11" height="4" fill="#74d42e"/><rect x="43.73" y="406.2" width="2.11" height="4" fill="#74d42e"/><rect x="46.29" y="406.2" width="2.11" height="4" fill="#74d42e"/><rect x="48.84" y="406.2" width="2.11" height="4" fill="#74d42e"/><rect x="51.40" y="406.2" width="2.11" height="4" fill="#74d42e"/><rect x="53.96" y="406.2" width="2.11" height="4" fill="#74d42e"/><rect x="56.51" y="406.2" width="2.11" height="4" fill="#74d42e"/><rect x="59.07" y="406.2" width="2.11" height="4" fill="#74d42e"/><rect x="61.62" y="406.2" width="2.11" height="4" fill="#74d42e"/><rect x="64.18" y="406.2" width="2.11" height="4" fill="#74d42e"/><rect x="66.74" y="406.2" width="2.11" height="4" fill="#74d42e"/><rect x="69.29" y="406.2" width="2.11" height="4" fill="#74d42e"/><rect x="71.85" y="406.2" width="2.11" height="4" fill="#74d42e"/><rect x="74.40" y="406.2" width="2.11" height="4" fill="#74d42e"/><rect x="76.96" y="406.2" width="2.11" height="4" fill="#74d42e"/><rect x="79.52" y="406.2" width="2.11" height="4" fill="#74d42e"/><rect x="82.07" y="406.2" width="2.11" height="4" fill="#74d42e"/><rect x="84.63" y="406.2" width="2.11" height="4" fill="#74d42e"/><rect x="87.19" y="406.2" width="2.11" height="4" fill="#74d42e"/><rect x="89.74" y="406.2" width="2.11" height="4" fill="#74d42e"/><rect x="92.30" y="406.2" width="2.11" height="4" fill="#74d42e"/><rect x="94.85" y="406.2" width="2.11" height="4" fill="#74d42e"/><rect x="97.41" y="406.2" width="2.11" height="4" fill="#74d42e"/><rect x="99.97" y="406.2" width="2.11" height="4" fill="#74d42e"/><rect x="102.52" y="406.2" width="2.11" height="4" fill="#74d42e"/><rect x="105.08" y="406.2" width="2.11" height="4" fill="#74d42e"/><rect x="107.63" y="406.2" width="2.11" height="4" fill="#74d42e"/><rect x="110.19" y="406.2" width="2.11" height="4" fill="#74d42e"/><rect x="112.75" y="406.2" width="2.11" height="4" fill="#74d42e"/><rect x="115.30" y="406.2" width="2.11" height="4" fill="#74d42e"/><rect x="117.86" y="406.2" width="2.11" height="4" fill="#74d42e"/><rect x="120.42" y="406.2" width="2.11" height="4" fill="#74d42e"/><rect x="122.97" y="406.2" width="2.11" height="4" fill="#74d42e"/><rect x="125.53" y="406.2" width="2.11" height="4" fill="#74d42e"/><rect x="128.08" y="406.2" width="2.11" height="4" fill="#74d42e"/><rect x="130.64" y="406.2" width="2.11" height="4" fill="#74d42e"/><rect x="133.20" y="406.2" width="2.11" height="4" fill="#74d42e"/><rect x="135.75" y="406.2" width="2.11" height="4" fill="#74d42e"/><rect x="138.31" y="406.2" width="2.11" height="4" fill="#74d42e"/><rect x="140.87" y="406.2" width="2.11" height="4" fill="#74d42e"/><rect x="143.42" y="406.2" width="2.11" height="4" fill="#74d42e"/><rect x="145.98" y="406.2" width="2.11" height="4" fill="#74d42e"/><rect x="148.53" y="406.2" width="2.11" height="4" fill="#74d42e"/><rect x="151.09" y="406.2" width="2.11" height="4" fill="#74d42e"/><rect x="153.65" y="406.2" width="2.11" height="4" fill="#74d42e"/><rect x="156.20" y="406.2" width="2.11" height="4" fill="#74d42e"/><rect x="158.76" y="406.2" width="2.11" height="4" fill="#74d42e"/><rect x="161.31" y="406.2" width="2.11" height="4" fill="#74d42e"/><rect x="163.87" y="406.2" width="2.11" height="4" fill="#74d42e"/><rect x="166.43" y="406.2" width="2.11" height="4" fill="#74d42e"/><rect x="168.98" y="406.2" width="2.11" height="4" fill="#74d42e"/><rect x="171.54" y="406.2" width="2.11" height="4" fill="#74d42e"/><rect x="174.10" y="406.2" width="2.11" height="4" fill="#74d42e"/><rect x="176.65" y="406.2" width="2.11" height="4" fill="#74d42e"/><rect x="179.21" y="406.2" width="2.11" height="4" fill="#74d42e"/><rect x="181.76" y="406.2" width="2.11" height="4" fill="#74d42e"/><rect x="184.32" y="406.2" width="2.11" height="4" fill="#d8d83a"/><rect x="186.88" y="406.2" width="2.11" height="4" fill="#d8d83a"/><rect x="189.43" y="406.2" width="2.11" height="4" fill="#d8d83a"/><rect x="191.99" y="406.2" width="2.11" height="4" fill="#d8d83a"/><rect x="194.54" y="406.2" width="2.11" height="4" fill="#d8d83a"/><rect x="197.10" y="406.2" width="2.11" height="4" fill="#d8d83a"/><rect x="199.66" y="406.2" width="2.11" height="4" fill="#d8d83a"/><rect x="202.21" y="406.2" width="2.11" height="4" fill="#d8d83a"/><rect x="204.77" y="406.2" width="2.11" height="4" fill="#4a1a0c"/><rect x="207.33" y="406.2" width="2.11" height="4" fill="#4a1a0c"/><rect x="209.88" y="406.2" width="2.11" height="4" fill="#4a1a0c"/><rect x="212.44" y="406.2" width="2.11" height="4" fill="#4a1a0c"/><rect x="214.99" y="406.2" width="2.11" height="4" fill="#4a1a0c"/><rect x="217.55" y="406.2" width="2.11" height="4" fill="#4a1a0c"/><rect x="220.11" y="406.2" width="2.11" height="4" fill="#4a1a0c"/><rect x="222.66" y="406.2" width="2.11" height="4" fill="#4a1a0c"/><rect x="225.22" y="406.2" width="2.11" height="4" fill="#4a1a0c"/><rect x="227.78" y="406.2" width="2.11" height="4" fill="#4a1a0c"/><rect x="230.33" y="406.2" width="2.11" height="4" fill="#4a1a0c"/><rect x="232.89" y="406.2" width="2.11" height="4" fill="#4a1a0c"/><rect x="235.44" y="406.2" width="2.11" height="4" fill="#4a1a0c"/><rect x="240.00" y="396.9" width="2.10" height="4" fill="#1c6a16"/><rect x="242.55" y="396.9" width="2.10" height="4" fill="#1c6a16"/><rect x="245.10" y="396.9" width="2.10" height="4" fill="#1c6a16"/><rect x="247.65" y="396.9" width="2.10" height="4" fill="#1c6a16"/><rect x="250.20" y="396.9" width="2.10" height="4" fill="#1c6a16"/><rect x="252.75" y="396.9" width="2.10" height="4" fill="#1c6a16"/><rect x="255.30" y="396.9" width="2.10" height="4" fill="#1c6a16"/><rect x="257.85" y="396.9" width="2.10" height="4" fill="#1c6a16"/><rect x="260.40" y="396.9" width="2.10" height="4" fill="#1c6a16"/><rect x="262.96" y="396.9" width="2.10" height="4" fill="#1c6a16"/><rect x="265.51" y="396.9" width="2.10" height="4" fill="#1c6a16"/><rect x="268.06" y="396.9" width="2.10" height="4" fill="#1c6a16"/><rect x="270.61" y="396.9" width="2.10" height="4" fill="#1c6a16"/><rect x="273.16" y="396.9" width="2.10" height="4" fill="#1c6a16"/><rect x="275.71" y="396.9" width="2.10" height="4" fill="#1c6a16"/><rect x="278.26" y="396.9" width="2.10" height="4" fill="#1c6a16"/><rect x="280.81" y="396.9" width="2.10" height="4" fill="#1c6a16"/><rect x="283.36" y="396.9" width="2.10" height="4" fill="#1c6a16"/><rect x="285.91" y="396.9" width="2.10" height="4" fill="#1c6a16"/><rect x="288.46" y="396.9" width="2.10" height="4" fill="#1c6a16"/><rect x="291.01" y="396.9" width="2.10" height="4" fill="#1c6a16"/><rect x="293.56" y="396.9" width="2.10" height="4" fill="#1c6a16"/><rect x="296.11" y="396.9" width="2.10" height="4" fill="#1c6a16"/><rect x="298.66" y="396.9" width="2.10" height="4" fill="#1c6a16"/><rect x="301.21" y="396.9" width="2.10" height="4" fill="#1c6a16"/><rect x="303.76" y="396.9" width="2.10" height="4" fill="#1c6a16"/><rect x="306.31" y="396.9" width="2.10" height="4" fill="#1c6a16"/><rect x="308.87" y="396.9" width="2.10" height="4" fill="#1c6a16"/><rect x="311.42" y="396.9" width="2.10" height="4" fill="#1c6a16"/><rect x="313.97" y="396.9" width="2.10" height="4" fill="#1c6a16"/><rect x="316.52" y="396.9" width="2.10" height="4" fill="#1c6a16"/><rect x="319.07" y="396.9" width="2.10" height="4" fill="#1c6a16"/><rect x="321.62" y="396.9" width="2.10" height="4" fill="#1c6a16"/><rect x="324.17" y="396.9" width="2.10" height="4" fill="#1c6a16"/><rect x="326.72" y="396.9" width="2.10" height="4" fill="#1c6a16"/><rect x="329.27" y="396.9" width="2.10" height="4" fill="#1c6a16"/><rect x="331.82" y="396.9" width="2.10" height="4" fill="#1c6a16"/><rect x="334.37" y="396.9" width="2.10" height="4" fill="#1c6a16"/><rect x="336.92" y="396.9" width="2.10" height="4" fill="#1c6a16"/><rect x="339.47" y="396.9" width="2.10" height="4" fill="#1c6a16"/><rect x="342.02" y="396.9" width="2.10" height="4" fill="#1c6a16"/><rect x="344.57" y="396.9" width="2.10" height="4" fill="#1c6a16"/><rect x="347.12" y="396.9" width="2.10" height="4" fill="#1c6a16"/><rect x="349.67" y="396.9" width="2.10" height="4" fill="#1c6a16"/><rect x="352.22" y="396.9" width="2.10" height="4" fill="#1c6a16"/><rect x="354.78" y="396.9" width="2.10" height="4" fill="#1c6a16"/><rect x="357.33" y="396.9" width="2.10" height="4" fill="#1c6a16"/><rect x="359.88" y="396.9" width="2.10" height="4" fill="#1c6a16"/><rect x="362.43" y="396.9" width="2.10" height="4" fill="#1c6a16"/><rect x="364.98" y="396.9" width="2.10" height="4" fill="#1c6a16"/><rect x="367.53" y="396.9" width="2.10" height="4" fill="#1c6a16"/><rect x="370.08" y="396.9" width="2.10" height="4" fill="#1c6a16"/><rect x="372.63" y="396.9" width="2.10" height="4" fill="#1c6a16"/><rect x="375.18" y="396.9" width="2.10" height="4" fill="#1c6a16"/><rect x="377.73" y="396.9" width="2.10" height="4" fill="#1c6a16"/><rect x="380.28" y="396.9" width="2.10" height="4" fill="#1c6a16"/><rect x="382.83" y="396.9" width="2.10" height="4" fill="#1c6a16"/><rect x="385.38" y="396.9" width="2.10" height="4" fill="#1c6a16"/><rect x="387.93" y="396.9" width="2.10" height="4" fill="#1c6a16"/><rect x="390.48" y="396.9" width="2.10" height="4" fill="#1c6a16"/><rect x="393.03" y="396.9" width="2.10" height="4" fill="#1c6a16"/><rect x="395.58" y="396.9" width="2.10" height="4" fill="#1c6a16"/><rect x="398.13" y="396.9" width="2.10" height="4" fill="#1c6a16"/><rect x="400.69" y="396.9" width="2.10" height="4" fill="#1c6a16"/><rect x="403.24" y="396.9" width="2.10" height="4" fill="#1c6a16"/><rect x="405.79" y="396.9" width="2.10" height="4" fill="#1c6a16"/><rect x="408.34" y="396.9" width="2.10" height="4" fill="#1c6a16"/><rect x="410.89" y="396.9" width="2.10" height="4" fill="#1c6a16"/><rect x="413.44" y="396.9" width="2.10" height="4" fill="#1c6a16"/><rect x="415.99" y="396.9" width="2.10" height="4" fill="#4a5a18"/><rect x="418.54" y="396.9" width="2.10" height="4" fill="#4a5a18"/><rect x="421.09" y="396.9" width="2.10" height="4" fill="#4a5a18"/><rect x="423.64" y="396.9" width="2.10" height="4" fill="#4a5a18"/><rect x="426.19" y="396.9" width="2.10" height="4" fill="#4a5a18"/><rect x="428.74" y="396.9" width="2.10" height="4" fill="#4a5a18"/><rect x="431.29" y="396.9" width="2.10" height="4" fill="#5a4014"/><rect x="433.84" y="396.9" width="2.10" height="4" fill="#5a4014"/><rect x="436.39" y="396.9" width="2.10" height="4" fill="#5a4014"/><rect x="438.94" y="396.9" width="2.10" height="4" fill="#5a4014"/><rect x="441.49" y="396.9" width="2.10" height="4" fill="#5a4014"/><rect x="444.04" y="396.9" width="2.10" height="4" fill="#4a1a0c"/><rect x="446.60" y="396.9" width="2.10" height="4" fill="#4a1a0c"/><rect x="449.15" y="396.9" width="2.10" height="4" fill="#4a1a0c"/><rect x="451.70" y="396.9" width="2.10" height="4" fill="#4a1a0c"/><rect x="454.25" y="396.9" width="2.10" height="4" fill="#4a1a0c"/><rect x="456.80" y="396.9" width="2.10" height="4" fill="#4a1a0c"/><rect x="459.35" y="396.9" width="2.10" height="4" fill="#4a1a0c"/><rect x="461.90" y="396.9" width="2.10" height="4" fill="#4a1a0c"/><rect x="464.45" y="396.9" width="2.10" height="4" fill="#4a1a0c"/><rect x="240.00" y="406.2" width="2.10" height="4" fill="#1c6a16"/><rect x="242.55" y="406.2" width="2.10" height="4" fill="#1c6a16"/><rect x="245.10" y="406.2" width="2.10" height="4" fill="#1c6a16"/><rect x="247.65" y="406.2" width="2.10" height="4" fill="#1c6a16"/><rect x="250.20" y="406.2" width="2.10" height="4" fill="#1c6a16"/><rect x="252.75" y="406.2" width="2.10" height="4" fill="#1c6a16"/><rect x="255.30" y="406.2" width="2.10" height="4" fill="#1c6a16"/><rect x="257.85" y="406.2" width="2.10" height="4" fill="#1c6a16"/><rect x="260.40" y="406.2" width="2.10" height="4" fill="#1c6a16"/><rect x="262.96" y="406.2" width="2.10" height="4" fill="#1c6a16"/><rect x="265.51" y="406.2" width="2.10" height="4" fill="#1c6a16"/><rect x="268.06" y="406.2" width="2.10" height="4" fill="#1c6a16"/><rect x="270.61" y="406.2" width="2.10" height="4" fill="#1c6a16"/><rect x="273.16" y="406.2" width="2.10" height="4" fill="#1c6a16"/><rect x="275.71" y="406.2" width="2.10" height="4" fill="#1c6a16"/><rect x="278.26" y="406.2" width="2.10" height="4" fill="#1c6a16"/><rect x="280.81" y="406.2" width="2.10" height="4" fill="#1c6a16"/><rect x="283.36" y="406.2" width="2.10" height="4" fill="#1c6a16"/><rect x="285.91" y="406.2" width="2.10" height="4" fill="#1c6a16"/><rect x="288.46" y="406.2" width="2.10" height="4" fill="#1c6a16"/><rect x="291.01" y="406.2" width="2.10" height="4" fill="#1c6a16"/><rect x="293.56" y="406.2" width="2.10" height="4" fill="#1c6a16"/><rect x="296.11" y="406.2" width="2.10" height="4" fill="#1c6a16"/><rect x="298.66" y="406.2" width="2.10" height="4" fill="#1c6a16"/><rect x="301.21" y="406.2" width="2.10" height="4" fill="#1c6a16"/><rect x="303.76" y="406.2" width="2.10" height="4" fill="#1c6a16"/><rect x="306.31" y="406.2" width="2.10" height="4" fill="#1c6a16"/><rect x="308.87" y="406.2" width="2.10" height="4" fill="#1c6a16"/><rect x="311.42" y="406.2" width="2.10" height="4" fill="#1c6a16"/><rect x="313.97" y="406.2" width="2.10" height="4" fill="#1c6a16"/><rect x="316.52" y="406.2" width="2.10" height="4" fill="#1c6a16"/><rect x="319.07" y="406.2" width="2.10" height="4" fill="#1c6a16"/><rect x="321.62" y="406.2" width="2.10" height="4" fill="#1c6a16"/><rect x="324.17" y="406.2" width="2.10" height="4" fill="#1c6a16"/><rect x="326.72" y="406.2" width="2.10" height="4" fill="#1c6a16"/><rect x="329.27" y="406.2" width="2.10" height="4" fill="#1c6a16"/><rect x="331.82" y="406.2" width="2.10" height="4" fill="#1c6a16"/><rect x="334.37" y="406.2" width="2.10" height="4" fill="#1c6a16"/><rect x="336.92" y="406.2" width="2.10" height="4" fill="#1c6a16"/><rect x="339.47" y="406.2" width="2.10" height="4" fill="#1c6a16"/><rect x="342.02" y="406.2" width="2.10" height="4" fill="#1c6a16"/><rect x="344.57" y="406.2" width="2.10" height="4" fill="#1c6a16"/><rect x="347.12" y="406.2" width="2.10" height="4" fill="#1c6a16"/><rect x="349.67" y="406.2" width="2.10" height="4" fill="#1c6a16"/><rect x="352.22" y="406.2" width="2.10" height="4" fill="#1c6a16"/><rect x="354.78" y="406.2" width="2.10" height="4" fill="#1c6a16"/><rect x="357.33" y="406.2" width="2.10" height="4" fill="#1c6a16"/><rect x="359.88" y="406.2" width="2.10" height="4" fill="#1c6a16"/><rect x="362.43" y="406.2" width="2.10" height="4" fill="#1c6a16"/><rect x="364.98" y="406.2" width="2.10" height="4" fill="#1c6a16"/><rect x="367.53" y="406.2" width="2.10" height="4" fill="#1c6a16"/><rect x="370.08" y="406.2" width="2.10" height="4" fill="#1c6a16"/><rect x="372.63" y="406.2" width="2.10" height="4" fill="#1c6a16"/><rect x="375.18" y="406.2" width="2.10" height="4" fill="#1c6a16"/><rect x="377.73" y="406.2" width="2.10" height="4" fill="#1c6a16"/><rect x="380.28" y="406.2" width="2.10" height="4" fill="#1c6a16"/><rect x="382.83" y="406.2" width="2.10" height="4" fill="#1c6a16"/><rect x="385.38" y="406.2" width="2.10" height="4" fill="#1c6a16"/><rect x="387.93" y="406.2" width="2.10" height="4" fill="#1c6a16"/><rect x="390.48" y="406.2" width="2.10" height="4" fill="#1c6a16"/><rect x="393.03" y="406.2" width="2.10" height="4" fill="#1c6a16"/><rect x="395.58" y="406.2" width="2.10" height="4" fill="#1c6a16"/><rect x="398.13" y="406.2" width="2.10" height="4" fill="#1c6a16"/><rect x="400.69" y="406.2" width="2.10" height="4" fill="#1c6a16"/><rect x="403.24" y="406.2" width="2.10" height="4" fill="#1c6a16"/><rect x="405.79" y="406.2" width="2.10" height="4" fill="#1c6a16"/><rect x="408.34" y="406.2" width="2.10" height="4" fill="#1c6a16"/><rect x="410.89" y="406.2" width="2.10" height="4" fill="#1c6a16"/><rect x="413.44" y="406.2" width="2.10" height="4" fill="#1c6a16"/><rect x="415.99" y="406.2" width="2.10" height="4" fill="#4a5a18"/><rect x="418.54" y="406.2" width="2.10" height="4" fill="#4a5a18"/><rect x="421.09" y="406.2" width="2.10" height="4" fill="#4a5a18"/><rect x="423.64" y="406.2" width="2.10" height="4" fill="#4a5a18"/><rect x="426.19" y="406.2" width="2.10" height="4" fill="#4a5a18"/><rect x="428.74" y="406.2" width="2.10" height="4" fill="#4a5a18"/><rect x="431.29" y="406.2" width="2.10" height="4" fill="#5a4014"/><rect x="433.84" y="406.2" width="2.10" height="4" fill="#5a4014"/><rect x="436.39" y="406.2" width="2.10" height="4" fill="#5a4014"/><rect x="438.94" y="406.2" width="2.10" height="4" fill="#5a4014"/><rect x="441.49" y="406.2" width="2.10" height="4" fill="#5a4014"/><rect x="444.04" y="406.2" width="2.10" height="4" fill="#4a1a0c"/><rect x="446.60" y="406.2" width="2.10" height="4" fill="#4a1a0c"/><rect x="449.15" y="406.2" width="2.10" height="4" fill="#4a1a0c"/><rect x="451.70" y="406.2" width="2.10" height="4" fill="#4a1a0c"/><rect x="454.25" y="406.2" width="2.10" height="4" fill="#4a1a0c"/><rect x="456.80" y="406.2" width="2.10" height="4" fill="#4a1a0c"/><rect x="459.35" y="406.2" width="2.10" height="4" fill="#4a1a0c"/><rect x="461.90" y="406.2" width="2.10" height="4" fill="#4a1a0c"/><rect x="464.45" y="406.2" width="2.10" height="4" fill="#4a1a0c"/></svg>
<div class="t" style="left:16.00px;top:401.78px;font-size:4.20px;color:#e6e6e6;font-weight:bold;transform:scaleX(0.8566);transform-origin:0 0;">-57</div><div class="t" style="left:27.60px;top:401.78px;font-size:4.20px;color:#e6e6e6;font-weight:bold;transform:scaleX(0.8566);transform-origin:0 0;">-54</div><div class="t" style="left:39.20px;top:401.78px;font-size:4.20px;color:#e6e6e6;font-weight:bold;transform:scaleX(0.8566);transform-origin:0 0;">-51</div><div class="t" style="left:50.80px;top:401.78px;font-size:4.20px;color:#e6e6e6;font-weight:bold;transform:scaleX(0.8566);transform-origin:0 0;">-48</div><div class="t" style="left:62.40px;top:401.78px;font-size:4.20px;color:#e6e6e6;font-weight:bold;transform:scaleX(0.8566);transform-origin:0 0;">-45</div><div class="t" style="left:74.00px;top:401.78px;font-size:4.20px;color:#e6e6e6;font-weight:bold;transform:scaleX(0.8566);transform-origin:0 0;">-42</div><div class="t" style="left:85.60px;top:401.78px;font-size:4.20px;color:#e6e6e6;font-weight:bold;transform:scaleX(0.8566);transform-origin:0 0;">-39</div><div class="t" style="left:97.20px;top:401.78px;font-size:4.20px;color:#e6e6e6;font-weight:bold;transform:scaleX(0.8566);transform-origin:0 0;">-36</div><div class="t" style="left:108.80px;top:401.78px;font-size:4.20px;color:#e6e6e6;font-weight:bold;transform:scaleX(0.8566);transform-origin:0 0;">-33</div><div class="t" style="left:120.40px;top:401.78px;font-size:4.20px;color:#e6e6e6;font-weight:bold;transform:scaleX(0.8566);transform-origin:0 0;">-30</div><div class="t" style="left:132.00px;top:401.78px;font-size:4.20px;color:#e6e6e6;font-weight:bold;transform:scaleX(0.8566);transform-origin:0 0;">-27</div><div class="t" style="left:143.60px;top:401.78px;font-size:4.20px;color:#e6e6e6;font-weight:bold;transform:scaleX(0.8566);transform-origin:0 0;">-24</div><div class="t" style="left:155.20px;top:401.78px;font-size:4.20px;color:#e6e6e6;font-weight:bold;transform:scaleX(0.8566);transform-origin:0 0;">-21</div><div class="t" style="left:166.80px;top:401.78px;font-size:4.20px;color:#e6e6e6;font-weight:bold;transform:scaleX(0.8566);transform-origin:0 0;">-18</div><div class="t" style="left:178.40px;top:401.78px;font-size:4.20px;color:#e6e6e6;font-weight:bold;transform:scaleX(0.8566);transform-origin:0 0;">-15</div><div class="t" style="left:190.00px;top:401.78px;font-size:4.20px;color:#e6e6e6;font-weight:bold;transform:scaleX(0.8566);transform-origin:0 0;">-12</div><div class="t" style="left:201.60px;top:401.78px;font-size:4.20px;color:#e6e6e6;font-weight:bold;transform:scaleX(1.3924);transform-origin:0 0;">-9</div><div class="t" style="left:213.20px;top:401.78px;font-size:4.20px;color:#e6e6e6;font-weight:bold;transform:scaleX(1.3924);transform-origin:0 0;">-6</div><div class="t" style="left:224.80px;top:401.78px;font-size:4.20px;color:#e6e6e6;font-weight:bold;transform:scaleX(1.3924);transform-origin:0 0;">-3</div><div class="t" style="left:245.50px;top:401.78px;font-size:4.20px;color:#e6e6e6;font-weight:bold;transform:scaleX(0.8566);transform-origin:0 0;">-57</div><div class="t" style="left:257.10px;top:401.78px;font-size:4.20px;color:#e6e6e6;font-weight:bold;transform:scaleX(0.8566);transform-origin:0 0;">-54</div><div class="t" style="left:268.70px;top:401.78px;font-size:4.20px;color:#e6e6e6;font-weight:bold;transform:scaleX(0.8566);transform-origin:0 0;">-51</div><div class="t" style="left:280.30px;top:401.78px;font-size:4.20px;color:#e6e6e6;font-weight:bold;transform:scaleX(0.8566);transform-origin:0 0;">-48</div><div class="t" style="left:291.90px;top:401.78px;font-size:4.20px;color:#e6e6e6;font-weight:bold;transform:scaleX(0.8566);transform-origin:0 0;">-45</div><div class="t" style="left:303.50px;top:401.78px;font-size:4.20px;color:#e6e6e6;font-weight:bold;transform:scaleX(0.8566);transform-origin:0 0;">-42</div><div class="t" style="left:315.10px;top:401.78px;font-size:4.20px;color:#e6e6e6;font-weight:bold;transform:scaleX(0.8566);transform-origin:0 0;">-39</div><div class="t" style="left:326.70px;top:401.78px;font-size:4.20px;color:#e6e6e6;font-weight:bold;transform:scaleX(0.8566);transform-origin:0 0;">-36</div><div class="t" style="left:338.30px;top:401.78px;font-size:4.20px;color:#e6e6e6;font-weight:bold;transform:scaleX(0.8566);transform-origin:0 0;">-33</div><div class="t" style="left:349.90px;top:401.78px;font-size:4.20px;color:#e6e6e6;font-weight:bold;transform:scaleX(0.8566);transform-origin:0 0;">-30</div><div class="t" style="left:361.50px;top:401.78px;font-size:4.20px;color:#e6e6e6;font-weight:bold;transform:scaleX(0.8566);transform-origin:0 0;">-27</div><div class="t" style="left:373.10px;top:401.78px;font-size:4.20px;color:#e6e6e6;font-weight:bold;transform:scaleX(0.8566);transform-origin:0 0;">-24</div><div class="t" style="left:384.70px;top:401.78px;font-size:4.20px;color:#e6e6e6;font-weight:bold;transform:scaleX(0.8566);transform-origin:0 0;">-21</div><div class="t" style="left:396.30px;top:401.78px;font-size:4.20px;color:#e6e6e6;font-weight:bold;transform:scaleX(0.8566);transform-origin:0 0;">-18</div><div class="t" style="left:407.90px;top:401.78px;font-size:4.20px;color:#e6e6e6;font-weight:bold;transform:scaleX(0.8566);transform-origin:0 0;">-15</div><div class="t" style="left:419.50px;top:401.78px;font-size:4.20px;color:#e6e6e6;font-weight:bold;transform:scaleX(0.8566);transform-origin:0 0;">-12</div><div class="t" style="left:431.10px;top:401.78px;font-size:4.20px;color:#e6e6e6;font-weight:bold;transform:scaleX(1.3924);transform-origin:0 0;">-9</div><div class="t" style="left:442.70px;top:401.78px;font-size:4.20px;color:#e6e6e6;font-weight:bold;transform:scaleX(1.3924);transform-origin:0 0;">-6</div><div class="t" style="left:454.30px;top:401.78px;font-size:4.20px;color:#e6e6e6;font-weight:bold;transform:scaleX(1.3924);transform-origin:0 0;">-3</div>
<div class="t" style="left:11.00px;top:412.03px;font-size:7.00px;color:#30c6d6;transform:scaleX(0.9126);transform-origin:0 0;">Fine Day Anthem</div>
<div class="t" style="left:11.00px;top:423.13px;font-size:7.00px;color:#30c6d6;transform:scaleX(0.9020);transform-origin:0 0;">Skrillex &amp; Boys Noize</div>
<div class="t" style="left:240.50px;top:412.03px;font-size:7.00px;color:#30c6d6;transform:scaleX(0.9043);transform-origin:0 0;">Asking</div>
<div class="t" style="left:240.50px;top:423.13px;font-size:7.00px;color:#30c6d6;transform:scaleX(0.9043);transform-origin:0 0;">Sonny Fodera &amp; MK</div>
<svg style="left:0;top:0" width="1" height="1">
<rect x="12" y="516.5" width="226.5" height="84" fill="#000"/>
<path d="M12.0 516.5 L12.0 447.5 L12.5 447.6 L13.0 448.0 L13.5 446.5 L14.0 449.0 L14.5 449.8 L15.0 446.7 L15.5 447.4 L16.0 447.6 L16.5 449.0 L17.0 447.1 L17.5 448.3 L18.0 448.9 L18.5 448.7 L19.0 446.4 L19.5 446.4 L20.0 446.5 L20.5 448.4 L21.0 446.7 L21.5 446.5 L22.0 448.9 L22.5 446.8 L23.0 446.5 L23.5 448.4 L24.0 446.5 L24.5 447.2 L25.0 447.8 L25.5 448.7 L26.0 448.3 L26.5 448.7 L27.0 446.3 L27.5 474.9 L28.0 478.2 L28.5 482.8 L29.0 487.3 L29.5 484.5 L30.0 480.2 L30.5 482.0 L31.0 483.3 L31.5 480.9 L32.0 480.1 L32.5 478.4 L33.0 481.2 L33.5 479.6 L34.0 480.0 L34.5 480.9 L35.0 478.6 L35.5 481.4 L36.0 480.3 L36.5 478.6 L37.0 481.4 L37.5 484.4 L38.0 479.4 L38.5 480.5 L39.0 479.5 L39.5 482.4 L40.0 479.3 L40.5 481.8 L41.0 480.8 L41.5 481.5 L42.0 483.1 L42.5 487.5 L43.0 480.4 L43.5 485.8 L44.0 484.5 L44.5 481.8 L45.0 482.1 L45.5 479.3 L46.0 480.5 L46.5 482.0 L47.0 488.0 L47.5 480.0 L48.0 481.1 L48.5 483.5 L49.0 482.6 L49.5 480.6 L50.0 482.0 L50.5 483.3 L51.0 467.1 L51.5 473.3 L52.0 466.7 L52.5 467.8 L53.0 469.8 L53.5 467.1 L54.0 469.1 L54.5 468.0 L55.0 467.8 L55.5 469.6 L56.0 474.8 L56.5 469.4 L57.0 475.7 L57.5 472.3 L58.0 469.0 L58.5 470.8 L59.0 472.9 L59.5 470.1 L60.0 471.1 L60.5 470.3 L61.0 472.3 L61.5 472.6 L62.0 473.3 L62.5 474.5 L63.0 474.9 L63.5 472.3 L64.0 472.7 L64.5 475.4 L65.0 473.9 L65.5 475.3 L66.0 474.9 L66.5 478.6 L67.0 475.6 L67.5 474.3 L68.0 495.0 L68.5 493.1 L69.0 495.8 L69.5 499.0 L70.0 501.7 L70.5 444.8 L71.0 442.8 L71.5 443.2 L72.0 442.9 L72.5 445.1 L73.0 445.5 L73.5 449.4 L74.0 444.9 L74.5 446.2 L75.0 449.3 L75.5 450.5 L76.0 454.5 L76.5 447.9 L77.0 452.4 L77.5 449.0 L78.0 450.6 L78.5 449.2 L79.0 447.7 L79.5 453.3 L80.0 449.0 L80.5 449.5 L81.0 452.2 L81.5 447.7 L82.0 453.8 L82.5 447.5 L83.0 450.6 L83.5 449.8 L84.0 453.4 L84.5 452.0 L85.0 448.9 L85.5 449.4 L86.0 450.8 L86.5 447.7 L87.0 448.6 L87.5 449.4 L88.0 448.3 L88.5 451.5 L89.0 453.6 L89.5 447.7 L90.0 448.8 L90.5 450.1 L91.0 450.3 L91.5 449.0 L92.0 449.8 L92.5 450.1 L93.0 447.9 L93.5 449.5 L94.0 454.3 L94.5 447.9 L95.0 448.6 L95.5 452.9 L96.0 450.9 L96.5 450.5 L97.0 450.9 L97.5 449.0 L98.0 448.4 L98.5 450.6 L99.0 450.8 L99.5 449.6 L100.0 454.6 L100.5 452.1 L101.0 448.1 L101.5 450.1 L102.0 449.6 L102.5 451.2 L103.0 450.4 L103.5 450.8 L104.0 450.8 L104.5 449.7 L105.0 449.4 L105.5 449.2 L106.0 449.0 L106.5 448.4 L107.0 448.2 L107.5 452.1 L108.0 485.9 L108.5 486.2 L109.0 487.1 L109.5 487.4 L110.0 446.9 L110.5 445.2 L111.0 447.0 L111.5 447.5 L112.0 446.5 L112.5 445.8 L113.0 448.4 L113.5 446.3 L114.0 445.4 L114.5 445.8 L115.0 447.2 L115.5 448.6 L116.0 452.8 L116.5 447.6 L117.0 446.8 L117.5 447.4 L118.0 446.2 L118.5 448.8 L119.0 448.4 L119.5 446.0 L120.0 448.2 L120.5 447.1 L121.0 447.1 L121.5 449.5 L122.0 453.2 L122.5 448.7 L123.0 449.3 L123.5 447.0 L124.0 449.7 L124.5 449.2 L125.0 452.0 L125.5 450.1 L126.0 446.7 L126.5 447.1 L127.0 449.7 L127.5 450.0 L128.0 447.4 L128.5 449.5 L129.0 489.9 L129.5 489.7 L130.0 488.5 L130.5 487.3 L131.0 489.7 L131.5 491.2 L132.0 488.3 L132.5 491.4 L133.0 487.0 L133.5 490.5 L134.0 489.1 L134.5 488.1 L135.0 490.2 L135.5 490.2 L136.0 490.9 L136.5 489.8 L137.0 491.5 L137.5 492.0 L138.0 490.5 L138.5 489.8 L139.0 491.5 L139.5 491.7 L140.0 488.2 L140.5 487.9 L141.0 489.3 L141.5 492.8 L142.0 490.1 L142.5 491.0 L143.0 488.5 L143.5 489.3 L144.0 493.0 L144.5 497.7 L145.0 489.8 L145.5 490.7 L146.0 493.2 L146.5 490.8 L147.0 489.4 L147.5 495.0 L148.0 493.4 L148.5 478.3 L149.0 475.5 L149.5 475.1 L150.0 476.0 L150.5 475.0 L151.0 475.1 L151.5 475.8 L152.0 476.5 L152.5 473.5 L153.0 474.4 L153.5 484.6 L154.0 474.6 L154.5 475.4 L155.0 476.5 L155.5 475.8 L156.0 476.2 L156.5 474.1 L157.0 472.8 L157.5 480.5 L158.0 474.3 L158.5 471.0 L159.0 472.2 L159.5 473.8 L160.0 468.4 L160.5 470.2 L161.0 467.7 L161.5 467.8 L162.0 467.2 L162.5 475.6 L163.0 470.7 L163.5 466.5 L164.0 467.7 L164.5 466.0 L165.0 466.6 L165.5 467.4 L166.0 469.3 L166.5 472.5 L167.0 468.4 L167.5 466.7 L168.0 466.3 L168.5 466.3 L169.0 467.2 L169.5 469.8 L170.0 469.4 L170.5 467.5 L171.0 470.0 L171.5 471.2 L172.0 476.2 L172.5 468.2 L173.0 475.1 L173.5 468.6 L174.0 470.0 L174.5 471.9 L175.0 469.9 L175.5 471.2 L176.0 471.0 L176.5 470.2 L177.0 474.5 L177.5 471.5 L178.0 474.6 L178.5 473.0 L179.0 472.8 L179.5 473.4 L180.0 477.8 L180.5 472.9 L181.0 480.3 L181.5 473.1 L182.0 475.6 L182.5 473.5 L183.0 474.8 L183.5 476.6 L184.0 478.2 L184.5 476.2 L185.0 497.8 L185.5 497.3 L186.0 499.0 L186.5 499.1 L187.0 439.3 L187.5 440.4 L188.0 442.3 L188.5 441.2 L189.0 443.7 L189.5 443.1 L190.0 444.5 L190.5 444.0 L191.0 447.2 L191.5 444.8 L192.0 446.6 L192.5 446.9 L193.0 448.6 L193.5 447.3 L194.0 448.1 L194.5 449.1 L195.0 448.5 L195.5 448.3 L196.0 448.6 L196.5 449.5 L197.0 450.7 L197.5 449.8 L198.0 448.3 L198.5 449.2 L199.0 448.6 L199.5 448.9 L200.0 451.1 L200.5 448.2 L201.0 448.5 L201.5 447.4 L202.0 450.8 L202.5 446.9 L203.0 447.4 L203.5 449.5 L204.0 449.0 L204.5 449.8 L205.0 449.3 L205.5 451.2 L206.0 447.9 L206.5 454.2 L207.0 449.7 L207.5 449.8 L208.0 450.3 L208.5 454.2 L209.0 448.4 L209.5 448.3 L210.0 450.3 L210.5 449.7 L211.0 449.5 L211.5 448.4 L212.0 448.6 L212.5 448.0 L213.0 447.7 L213.5 448.1 L214.0 448.3 L214.5 448.0 L215.0 449.6 L215.5 449.6 L216.0 449.2 L216.5 449.9 L217.0 448.9 L217.5 453.3 L218.0 449.7 L218.5 449.2 L219.0 450.2 L219.5 448.1 L220.0 450.6 L220.5 450.5 L221.0 450.8 L221.5 449.4 L222.0 448.8 L222.5 450.6 L223.0 450.9 L223.5 450.7 L224.0 448.1 L224.5 448.4 L225.0 486.5 L225.5 485.9 L226.0 485.9 L226.5 486.1 L227.0 447.1 L227.5 447.5 L228.0 448.4 L228.5 448.6 L229.0 446.3 L229.5 446.7 L230.0 447.0 L230.5 446.1 L231.0 446.4 L231.5 448.7 L232.0 451.0 L232.5 447.0 L233.0 447.9 L233.5 448.7 L234.0 448.5 L234.5 446.0 L235.0 447.0 L235.5 448.9 L236.0 447.4 L236.5 448.2 L237.0 449.3 L237.5 448.4 L238.0 447.4 L238.0 516.5 Z" fill="#ff00ff"/>
<clipPath id="wa"><rect x="12" y="516.5" width="226.5" height="84"/></clipPath>
<rect x="12" y="516.5" width="226.5" height="84" fill="#000"/>
<path d="M12.0 516.5 L12.0 586.4 L12.5 584.9 L13.0 584.7 L13.5 583.6 L14.0 585.9 L14.5 583.2 L15.0 584.6 L15.5 585.6 L16.0 585.5 L16.5 586.3 L17.0 582.7 L17.5 586.3 L18.0 584.5 L18.5 586.6 L19.0 586.1 L19.5 586.5 L20.0 582.3 L20.5 585.7 L21.0 584.8 L21.5 584.9 L22.0 585.1 L22.5 586.3 L23.0 584.9 L23.5 582.7 L24.0 585.0 L24.5 586.5 L25.0 584.9 L25.5 585.0 L26.0 584.9 L26.5 583.0 L27.0 585.0 L27.5 544.7 L28.0 542.7 L28.5 543.7 L29.0 541.5 L29.5 548.7 L30.0 549.5 L30.5 550.9 L31.0 548.1 L31.5 548.1 L32.0 549.3 L32.5 551.1 L33.0 551.3 L33.5 551.8 L34.0 551.6 L34.5 550.4 L35.0 552.2 L35.5 551.1 L36.0 548.4 L36.5 550.0 L37.0 550.6 L37.5 549.3 L38.0 551.8 L38.5 549.4 L39.0 551.4 L39.5 550.4 L40.0 551.5 L40.5 549.2 L41.0 548.9 L41.5 549.3 L42.0 543.5 L42.5 551.0 L43.0 548.1 L43.5 551.5 L44.0 550.6 L44.5 551.4 L45.0 550.0 L45.5 551.0 L46.0 550.9 L46.5 549.7 L47.0 551.9 L47.5 550.6 L48.0 551.7 L48.5 550.7 L49.0 550.7 L49.5 552.1 L50.0 549.3 L50.5 548.3 L51.0 561.2 L51.5 567.1 L52.0 564.1 L52.5 566.7 L53.0 562.1 L53.5 563.9 L54.0 566.0 L54.5 565.7 L55.0 565.9 L55.5 563.9 L56.0 565.4 L56.5 563.5 L57.0 563.1 L57.5 561.7 L58.0 563.7 L58.5 560.8 L59.0 558.2 L59.5 562.4 L60.0 559.7 L60.5 560.0 L61.0 560.3 L61.5 559.3 L62.0 561.8 L62.5 561.0 L63.0 559.0 L63.5 561.1 L64.0 553.4 L64.5 560.2 L65.0 556.7 L65.5 555.6 L66.0 558.2 L66.5 551.4 L67.0 557.9 L67.5 558.8 L68.0 528.2 L68.5 528.5 L69.0 525.7 L69.5 527.3 L70.0 526.9 L70.5 585.5 L71.0 584.8 L71.5 585.8 L72.0 585.1 L72.5 585.5 L73.0 585.1 L73.5 584.0 L74.0 584.8 L74.5 584.9 L75.0 584.5 L75.5 585.0 L76.0 584.7 L76.5 583.1 L77.0 583.7 L77.5 585.7 L78.0 582.1 L78.5 583.1 L79.0 583.5 L79.5 585.6 L80.0 584.0 L80.5 583.8 L81.0 580.5 L81.5 584.1 L82.0 585.8 L82.5 584.2 L83.0 584.5 L83.5 585.7 L84.0 584.7 L84.5 584.5 L85.0 584.3 L85.5 585.2 L86.0 585.1 L86.5 585.2 L87.0 584.9 L87.5 585.1 L88.0 585.6 L88.5 583.8 L89.0 581.3 L89.5 584.5 L90.0 583.6 L90.5 580.0 L91.0 585.2 L91.5 585.3 L92.0 583.9 L92.5 584.2 L93.0 580.0 L93.5 584.9 L94.0 583.6 L94.5 585.0 L95.0 584.0 L95.5 585.0 L96.0 585.6 L96.5 583.9 L97.0 583.7 L97.5 584.1 L98.0 585.2 L98.5 583.5 L99.0 583.1 L99.5 585.7 L100.0 584.5 L100.5 585.1 L101.0 583.4 L101.5 583.6 L102.0 584.1 L102.5 584.4 L103.0 585.6 L103.5 585.4 L104.0 585.7 L104.5 585.2 L105.0 585.1 L105.5 583.6 L106.0 583.2 L106.5 585.2 L107.0 584.6 L107.5 583.5 L108.0 544.7 L108.5 543.0 L109.0 544.3 L109.5 544.1 L110.0 584.4 L110.5 585.2 L111.0 583.8 L111.5 583.0 L112.0 585.0 L112.5 583.9 L113.0 584.8 L113.5 583.4 L114.0 585.4 L114.5 581.8 L115.0 585.7 L115.5 585.2 L116.0 585.3 L116.5 583.4 L117.0 583.2 L117.5 584.0 L118.0 584.3 L118.5 583.0 L119.0 584.6 L119.5 585.2 L120.0 584.1 L120.5 584.1 L121.0 585.0 L121.5 585.0 L122.0 580.2 L122.5 583.5 L123.0 583.3 L123.5 580.9 L124.0 584.4 L124.5 584.1 L125.0 584.1 L125.5 584.8 L126.0 584.0 L126.5 584.4 L127.0 583.4 L127.5 584.0 L128.0 585.8 L128.5 583.6 L129.0 536.3 L129.5 537.4 L130.0 536.6 L130.5 538.4 L131.0 539.9 L131.5 536.6 L132.0 537.2 L132.5 533.7 L133.0 540.4 L133.5 539.0 L134.0 534.8 L134.5 536.9 L135.0 538.5 L135.5 534.2 L136.0 540.4 L136.5 539.0 L137.0 538.5 L137.5 538.2 L138.0 538.7 L138.5 533.0 L139.0 539.6 L139.5 534.2 L140.0 538.7 L140.5 538.8 L141.0 532.8 L141.5 539.4 L142.0 537.6 L142.5 537.1 L143.0 535.9 L143.5 533.3 L144.0 538.4 L144.5 536.9 L145.0 540.7 L145.5 538.1 L146.0 540.4 L146.5 540.6 L147.0 537.7 L147.5 540.0 L148.0 540.0 L148.5 551.1 L149.0 557.0 L149.5 556.9 L150.0 557.9 L150.5 558.1 L151.0 554.6 L151.5 551.8 L152.0 555.4 L152.5 557.6 L153.0 555.3 L153.5 556.5 L154.0 556.7 L154.5 556.2 L155.0 556.8 L155.5 558.8 L156.0 557.4 L156.5 558.2 L157.0 555.8 L157.5 557.5 L158.0 555.8 L158.5 556.9 L159.0 555.4 L159.5 558.5 L160.0 555.4 L160.5 556.4 L161.0 556.1 L161.5 558.9 L162.0 557.0 L162.5 557.6 L163.0 557.5 L163.5 559.4 L164.0 552.7 L164.5 558.9 L165.0 558.1 L165.5 557.4 L166.0 556.1 L166.5 557.4 L167.0 566.7 L167.5 564.4 L168.0 563.3 L168.5 563.2 L169.0 566.2 L169.5 558.6 L170.0 557.9 L170.5 563.0 L171.0 562.6 L171.5 564.1 L172.0 562.0 L172.5 561.8 L173.0 561.8 L173.5 557.6 L174.0 562.0 L174.5 562.5 L175.0 560.4 L175.5 562.6 L176.0 554.9 L176.5 560.9 L177.0 561.1 L177.5 560.9 L178.0 555.7 L178.5 557.8 L179.0 558.5 L179.5 557.8 L180.0 558.3 L180.5 559.6 L181.0 558.1 L181.5 556.4 L182.0 557.3 L182.5 559.5 L183.0 556.3 L183.5 556.8 L184.0 521.8 L184.5 520.4 L185.0 518.5 L185.5 519.7 L186.0 518.9 L186.5 516.5 L187.0 584.4 L187.5 584.6 L188.0 584.0 L188.5 584.9 L189.0 583.4 L189.5 584.0 L190.0 583.7 L190.5 584.4 L191.0 583.3 L191.5 585.2 L192.0 582.2 L192.5 585.2 L193.0 585.0 L193.5 585.4 L194.0 585.0 L194.5 583.4 L195.0 580.3 L195.5 585.7 L196.0 584.8 L196.5 583.1 L197.0 583.8 L197.5 580.7 L198.0 584.0 L198.5 583.8 L199.0 585.7 L199.5 585.2 L200.0 585.6 L200.5 580.7 L201.0 584.8 L201.5 584.0 L202.0 585.5 L202.5 584.4 L203.0 584.4 L203.5 583.2 L204.0 583.8 L204.5 584.2 L205.0 583.1 L205.5 584.0 L206.0 583.0 L206.5 584.5 L207.0 584.1 L207.5 582.6 L208.0 585.0 L208.5 584.6 L209.0 584.8 L209.5 584.0 L210.0 583.3 L210.5 585.1 L211.0 583.3 L211.5 583.0 L212.0 584.5 L212.5 583.9 L213.0 584.2 L213.5 585.0 L214.0 585.7 L214.5 585.8 L215.0 584.8 L215.5 585.4 L216.0 583.3 L216.5 584.9 L217.0 584.7 L217.5 584.8 L218.0 585.6 L218.5 585.1 L219.0 584.1 L219.5 584.4 L220.0 585.6 L220.5 582.6 L221.0 583.7 L221.5 585.4 L222.0 583.2 L222.5 583.7 L223.0 584.5 L223.5 580.8 L224.0 585.4 L224.5 584.1 L225.0 546.7 L225.5 548.3 L226.0 545.0 L226.5 547.8 L227.0 583.5 L227.5 580.2 L228.0 584.0 L228.5 585.1 L229.0 583.4 L229.5 584.1 L230.0 584.0 L230.5 583.8 L231.0 584.9 L231.5 585.1 L232.0 584.2 L232.5 583.8 L233.0 584.2 L233.5 584.2 L234.0 584.7 L234.5 583.2 L235.0 584.9 L235.5 583.1 L236.0 584.3 L236.5 585.7 L237.0 585.3 L237.5 583.2 L238.0 583.6 L238.0 516.5 Z" fill="#a8cdf0"/>
<path d="M240.5 516.5 L240.5 501.8 L241.0 505.7 L241.5 501.4 L242.0 500.9 L242.5 498.1 L243.0 497.4 L243.5 496.8 L244.0 496.1 L244.5 496.4 L245.0 496.9 L245.5 489.9 L246.0 491.9 L246.5 488.7 L247.0 496.8 L247.5 491.0 L248.0 494.0 L248.5 490.3 L249.0 486.3 L249.5 488.0 L250.0 492.3 L250.5 488.4 L251.0 488.2 L251.5 488.6 L252.0 486.0 L252.5 495.1 L253.0 488.9 L253.5 485.5 L254.0 489.6 L254.5 487.9 L255.0 487.5 L255.5 493.7 L256.0 490.8 L256.5 487.2 L257.0 491.0 L257.5 490.7 L258.0 485.5 L258.5 497.6 L259.0 497.1 L259.5 489.8 L260.0 490.5 L260.5 488.1 L261.0 498.1 L261.5 489.6 L262.0 487.0 L262.5 486.3 L263.0 485.7 L263.5 487.8 L264.0 488.2 L264.5 485.4 L265.0 486.1 L265.5 488.8 L266.0 490.5 L266.5 491.4 L267.0 486.4 L267.5 484.9 L268.0 487.5 L268.5 490.8 L269.0 497.7 L269.5 484.6 L270.0 486.7 L270.5 497.9 L271.0 485.7 L271.5 489.6 L272.0 489.0 L272.5 486.2 L273.0 493.9 L273.5 486.2 L274.0 486.0 L274.5 490.2 L275.0 482.3 L275.5 482.6 L276.0 478.4 L276.5 479.7 L277.0 484.7 L277.5 479.7 L278.0 490.7 L278.5 490.1 L279.0 492.3 L279.5 478.4 L280.0 484.2 L280.5 482.0 L281.0 481.8 L281.5 489.7 L282.0 485.1 L282.5 480.7 L283.0 485.0 L283.5 478.6 L284.0 482.7 L284.5 482.1 L285.0 484.6 L285.5 484.3 L286.0 483.8 L286.5 484.1 L287.0 480.9 L287.5 480.4 L288.0 483.4 L288.5 479.9 L289.0 484.2 L289.5 480.5 L290.0 480.0 L290.5 483.8 L291.0 479.3 L291.5 481.7 L292.0 485.2 L292.5 484.4 L293.0 481.5 L293.5 482.2 L294.0 489.6 L294.5 480.4 L295.0 481.4 L295.5 485.6 L296.0 485.2 L296.5 481.7 L297.0 479.6 L297.5 481.2 L298.0 482.9 L298.5 493.8 L299.0 481.3 L299.5 480.3 L300.0 484.8 L300.5 485.2 L301.0 494.1 L301.5 479.7 L302.0 488.8 L302.5 482.8 L303.0 479.5 L303.5 483.7 L304.0 481.6 L304.5 482.4 L305.0 485.9 L305.5 485.7 L306.0 481.5 L306.5 483.6 L307.0 480.2 L307.5 483.1 L308.0 479.6 L308.5 484.1 L309.0 483.0 L309.5 490.8 L310.0 485.5 L310.5 483.3 L311.0 483.2 L311.5 483.3 L312.0 485.6 L312.5 484.6 L313.0 485.5 L313.5 481.6 L314.0 482.3 L314.5 486.5 L315.0 480.7 L315.5 481.3 L316.0 462.8 L316.5 464.9 L317.0 462.5 L317.5 461.0 L318.0 464.5 L318.5 463.7 L319.0 459.5 L319.5 460.8 L320.0 466.0 L320.5 460.9 L321.0 458.5 L321.5 464.5 L322.0 460.3 L322.5 461.3 L323.0 461.9 L323.5 466.5 L324.0 464.9 L324.5 466.1 L325.0 463.0 L325.5 459.9 L326.0 464.8 L326.5 464.7 L327.0 462.8 L327.5 459.5 L328.0 460.0 L328.5 462.4 L329.0 459.4 L329.5 472.7 L330.0 472.7 L330.5 463.3 L331.0 460.3 L331.5 463.6 L332.0 461.5 L332.5 462.5 L333.0 464.7 L333.5 463.4 L334.0 442.6 L334.5 442.8 L335.0 445.1 L335.5 443.0 L336.0 443.8 L336.5 440.1 L337.0 444.3 L337.5 441.4 L338.0 445.7 L338.5 445.0 L339.0 441.8 L339.5 446.9 L340.0 445.1 L340.5 443.7 L341.0 446.3 L341.5 442.9 L342.0 443.7 L342.5 442.5 L343.0 444.8 L343.5 441.9 L344.0 442.6 L344.5 446.1 L345.0 448.8 L345.5 441.9 L346.0 445.7 L346.5 444.9 L347.0 443.3 L347.5 444.0 L348.0 441.6 L348.5 442.4 L349.0 446.4 L349.5 444.9 L350.0 441.6 L350.5 440.3 L351.0 443.8 L351.5 442.5 L352.0 448.4 L352.5 441.2 L353.0 439.3 L353.5 439.5 L354.0 446.9 L354.5 446.9 L355.0 440.6 L355.5 441.4 L356.0 440.0 L356.5 440.8 L357.0 446.7 L357.5 442.7 L358.0 443.2 L358.5 442.4 L359.0 443.3 L359.5 437.7 L360.0 440.8 L360.5 452.1 L361.0 438.3 L361.5 441.2 L362.0 441.4 L362.5 443.6 L363.0 441.1 L363.5 437.4 L364.0 437.8 L364.5 449.2 L365.0 443.0 L365.5 437.6 L366.0 437.6 L366.5 439.6 L367.0 441.8 L367.5 441.4 L368.0 442.4 L368.5 439.1 L369.0 437.9 L369.5 443.4 L370.0 441.9 L370.5 437.9 L371.0 445.9 L371.5 439.8 L372.0 438.8 L372.5 441.5 L373.0 438.1 L373.5 440.9 L374.0 442.9 L374.5 438.6 L375.0 443.8 L375.5 443.6 L376.0 438.4 L376.5 439.1 L377.0 441.4 L377.5 441.3 L378.0 442.0 L378.5 443.9 L379.0 444.3 L379.5 440.4 L380.0 439.8 L380.5 442.7 L381.0 443.8 L381.5 443.0 L382.0 444.5 L382.5 444.8 L383.0 438.9 L383.5 451.3 L384.0 440.1 L384.5 443.9 L385.0 442.8 L385.5 441.8 L386.0 438.0 L386.5 450.4 L387.0 441.3 L387.5 440.9 L388.0 480.2 L388.5 480.5 L389.0 484.3 L389.5 480.3 L390.0 483.6 L390.5 481.1 L391.0 486.0 L391.5 485.0 L392.0 479.2 L392.5 477.9 L393.0 481.8 L393.5 480.4 L394.0 480.1 L394.5 477.6 L395.0 476.2 L395.5 482.8 L396.0 479.5 L396.5 479.4 L397.0 491.1 L397.5 480.9 L398.0 480.4 L398.5 478.8 L399.0 482.5 L399.5 482.6 L400.0 477.9 L400.5 483.0 L401.0 485.3 L401.5 482.9 L402.0 480.9 L402.5 478.2 L403.0 483.4 L403.5 483.1 L404.0 477.9 L404.5 478.7 L405.0 461.1 L405.5 460.7 L406.0 454.1 L406.5 460.3 L407.0 464.1 L407.5 460.0 L408.0 463.2 L408.5 457.7 L409.0 457.6 L409.5 461.3 L410.0 456.7 L410.5 464.3 L411.0 455.7 L411.5 457.0 L412.0 458.2 L412.5 459.1 L413.0 461.6 L413.5 468.7 L414.0 454.9 L414.5 455.2 L415.0 458.9 L415.5 456.4 L416.0 469.0 L416.5 466.3 L417.0 463.8 L417.5 462.9 L418.0 461.3 L418.5 464.5 L419.0 456.3 L419.5 460.8 L420.0 464.7 L420.5 456.1 L421.0 456.9 L421.5 463.7 L422.0 461.6 L422.5 458.0 L423.0 456.6 L423.5 458.5 L424.0 442.3 L424.5 437.9 L425.0 443.4 L425.5 438.7 L426.0 440.1 L426.5 440.3 L427.0 441.0 L427.5 447.6 L428.0 443.7 L428.5 439.7 L429.0 443.0 L429.5 437.3 L430.0 450.7 L430.5 442.6 L431.0 439.7 L431.5 442.9 L432.0 443.8 L432.5 442.9 L433.0 443.1 L433.5 443.3 L434.0 439.3 L434.5 451.0 L435.0 439.7 L435.5 440.2 L436.0 447.4 L436.5 440.8 L437.0 439.4 L437.5 448.7 L438.0 440.5 L438.5 442.9 L439.0 442.7 L439.5 443.7 L440.0 441.2 L440.5 451.5 L441.0 441.6 L441.5 440.1 L442.0 438.5 L442.5 439.6 L443.0 442.6 L443.5 438.1 L444.0 444.1 L444.5 447.9 L445.0 438.4 L445.5 438.3 L446.0 440.6 L446.5 444.0 L447.0 440.8 L447.5 444.6 L448.0 439.1 L448.5 439.3 L449.0 447.5 L449.5 442.7 L450.0 441.3 L450.5 440.0 L451.0 439.2 L451.5 444.2 L452.0 449.7 L452.5 451.6 L453.0 441.2 L453.5 442.5 L454.0 450.3 L454.5 443.4 L455.0 442.6 L455.5 440.6 L456.0 440.8 L456.5 438.0 L457.0 442.2 L457.5 450.6 L458.0 442.6 L458.5 443.6 L459.0 442.2 L459.5 448.5 L460.0 444.9 L460.5 444.9 L461.0 516.5 L461.0 516.5 Z" fill="#ff00ff"/>
<path d="M240.5 516.5 L240.5 525.4 L241.0 525.3 L241.5 525.4 L242.0 524.9 L242.5 527.1 L243.0 525.8 L243.5 525.0 L244.0 536.9 L244.5 549.4 L245.0 545.5 L245.5 541.9 L246.0 550.8 L246.5 550.0 L247.0 545.0 L247.5 545.0 L248.0 546.0 L248.5 544.3 L249.0 544.7 L249.5 548.5 L250.0 547.4 L250.5 549.1 L251.0 547.2 L251.5 544.2 L252.0 547.7 L252.5 546.5 L253.0 549.1 L253.5 542.6 L254.0 546.4 L254.5 548.1 L255.0 547.5 L255.5 545.6 L256.0 549.9 L256.5 544.4 L257.0 546.0 L257.5 544.2 L258.0 547.7 L258.5 550.3 L259.0 548.9 L259.5 542.2 L260.0 549.0 L260.5 544.6 L261.0 544.6 L261.5 536.5 L262.0 547.7 L262.5 547.5 L263.0 539.0 L263.5 548.4 L264.0 546.4 L264.5 544.9 L265.0 544.9 L265.5 546.4 L266.0 547.8 L266.5 548.6 L267.0 547.7 L267.5 546.3 L268.0 547.6 L268.5 547.1 L269.0 545.8 L269.5 547.6 L270.0 550.3 L270.5 549.1 L271.0 547.9 L271.5 549.9 L272.0 550.3 L272.5 548.7 L273.0 547.4 L273.5 544.5 L274.0 545.5 L274.5 549.6 L275.0 548.7 L275.5 549.0 L276.0 546.1 L276.5 546.1 L277.0 547.5 L277.5 544.3 L278.0 541.8 L278.5 550.4 L279.0 540.2 L279.5 550.4 L280.0 539.1 L280.5 547.2 L281.0 548.4 L281.5 546.9 L282.0 544.4 L282.5 550.0 L283.0 549.5 L283.5 547.6 L284.0 542.0 L284.5 535.7 L285.0 535.6 L285.5 547.1 L286.0 535.4 L286.5 549.2 L287.0 543.5 L287.5 547.1 L288.0 545.0 L288.5 545.1 L289.0 545.0 L289.5 545.1 L290.0 545.5 L290.5 548.9 L291.0 545.0 L291.5 545.9 L292.0 546.0 L292.5 545.7 L293.0 547.5 L293.5 543.4 L294.0 549.7 L294.5 550.0 L295.0 544.3 L295.5 544.2 L296.0 549.9 L296.5 545.2 L297.0 537.7 L297.5 544.1 L298.0 548.6 L298.5 536.8 L299.0 549.7 L299.5 547.2 L300.0 546.4 L300.5 544.5 L301.0 548.5 L301.5 544.4 L302.0 544.7 L302.5 546.4 L303.0 543.5 L303.5 546.5 L304.0 549.3 L304.5 546.4 L305.0 549.7 L305.5 546.7 L306.0 548.2 L306.5 549.8 L307.0 545.5 L307.5 546.7 L308.0 545.0 L308.5 543.7 L309.0 549.9 L309.5 548.7 L310.0 544.9 L310.5 546.9 L311.0 545.1 L311.5 544.4 L312.0 549.9 L312.5 548.0 L313.0 548.7 L313.5 543.2 L314.0 547.3 L314.5 543.5 L315.0 562.5 L315.5 561.4 L316.0 549.9 L316.5 561.7 L317.0 560.3 L317.5 554.2 L318.0 560.4 L318.5 557.1 L319.0 560.7 L319.5 562.9 L320.0 563.4 L320.5 559.1 L321.0 559.2 L321.5 556.0 L322.0 543.5 L322.5 563.3 L323.0 556.3 L323.5 558.2 L324.0 560.3 L324.5 559.3 L325.0 550.3 L325.5 556.7 L326.0 561.5 L326.5 547.0 L327.0 551.5 L327.5 560.8 L328.0 559.6 L328.5 560.7 L329.0 544.1 L329.5 554.7 L330.0 563.3 L330.5 557.1 L331.0 556.2 L331.5 557.9 L332.0 560.9 L332.5 558.4 L333.0 557.0 L333.5 562.6 L334.0 594.5 L334.5 593.1 L335.0 592.6 L335.5 590.2 L336.0 590.8 L336.5 593.2 L337.0 591.1 L337.5 589.2 L338.0 591.0 L338.5 592.9 L339.0 591.9 L339.5 593.1 L340.0 590.2 L340.5 589.6 L341.0 590.3 L341.5 592.0 L342.0 591.8 L342.5 589.0 L343.0 593.2 L343.5 585.1 L344.0 589.3 L344.5 589.8 L345.0 592.9 L345.5 585.9 L346.0 589.6 L346.5 593.3 L347.0 590.8 L347.5 593.8 L348.0 589.1 L348.5 590.7 L349.0 589.2 L349.5 593.1 L350.0 589.4 L350.5 588.5 L351.0 582.2 L351.5 591.4 L352.0 588.2 L352.5 591.8 L353.0 592.0 L353.5 591.7 L354.0 592.1 L354.5 595.9 L355.0 596.2 L355.5 594.8 L356.0 593.4 L356.5 595.4 L357.0 584.0 L357.5 591.9 L358.0 594.6 L358.5 592.6 L359.0 596.2 L359.5 596.6 L360.0 595.8 L360.5 588.7 L361.0 586.2 L361.5 592.8 L362.0 591.0 L362.5 591.2 L363.0 593.8 L363.5 594.3 L364.0 592.0 L364.5 594.1 L365.0 587.0 L365.5 590.6 L366.0 592.9 L366.5 595.4 L367.0 588.1 L367.5 595.4 L368.0 593.0 L368.5 596.0 L369.0 591.2 L369.5 596.4 L370.0 594.5 L370.5 592.2 L371.0 596.4 L371.5 593.6 L372.0 593.0 L372.5 590.8 L373.0 589.7 L373.5 593.8 L374.0 589.8 L374.5 581.6 L375.0 582.0 L375.5 587.8 L376.0 582.7 L376.5 590.5 L377.0 590.4 L377.5 584.6 L378.0 583.6 L378.5 592.0 L379.0 591.9 L379.5 587.6 L380.0 594.5 L380.5 590.5 L381.0 590.0 L381.5 591.7 L382.0 593.2 L382.5 593.7 L383.0 593.1 L383.5 593.5 L384.0 590.5 L384.5 590.9 L385.0 595.0 L385.5 581.1 L386.0 591.0 L386.5 594.1 L387.0 595.0 L387.5 591.8 L388.0 552.8 L388.5 549.4 L389.0 551.0 L389.5 552.8 L390.0 548.4 L390.5 552.0 L391.0 544.7 L391.5 541.3 L392.0 552.4 L392.5 552.9 L393.0 552.4 L393.5 550.3 L394.0 548.4 L394.5 551.9 L395.0 552.6 L395.5 550.4 L396.0 551.2 L396.5 551.8 L397.0 543.3 L397.5 549.6 L398.0 551.7 L398.5 542.1 L399.0 549.5 L399.5 549.1 L400.0 544.9 L400.5 549.7 L401.0 553.3 L401.5 542.2 L402.0 550.9 L402.5 549.3 L403.0 551.1 L403.5 549.1 L404.0 555.5 L404.5 551.1 L405.0 551.3 L405.5 544.2 L406.0 571.4 L406.5 565.7 L407.0 562.7 L407.5 570.9 L408.0 566.3 L408.5 565.9 L409.0 572.0 L409.5 566.3 L410.0 562.7 L410.5 551.9 L411.0 558.4 L411.5 564.5 L412.0 564.2 L412.5 556.5 L413.0 565.9 L413.5 571.8 L414.0 569.4 L414.5 566.4 L415.0 572.9 L415.5 563.2 L416.0 567.3 L416.5 573.5 L417.0 568.2 L417.5 569.0 L418.0 571.0 L418.5 563.6 L419.0 574.5 L419.5 569.6 L420.0 573.2 L420.5 563.8 L421.0 572.4 L421.5 569.3 L422.0 556.9 L422.5 569.5 L423.0 573.4 L423.5 575.3 L424.0 597.6 L424.5 592.6 L425.0 591.9 L425.5 596.0 L426.0 594.3 L426.5 596.0 L427.0 591.3 L427.5 591.6 L428.0 591.2 L428.5 592.0 L429.0 584.2 L429.5 592.6 L430.0 592.3 L430.5 593.1 L431.0 596.6 L431.5 595.2 L432.0 597.9 L432.5 593.1 L433.0 592.4 L433.5 591.4 L434.0 597.6 L434.5 592.7 L435.0 583.4 L435.5 593.8 L436.0 595.7 L436.5 584.9 L437.0 583.8 L437.5 597.2 L438.0 583.2 L438.5 594.5 L439.0 596.5 L439.5 595.7 L440.0 594.7 L440.5 596.3 L441.0 591.3 L441.5 592.2 L442.0 594.4 L442.5 591.0 L443.0 596.4 L443.5 588.1 L444.0 591.2 L444.5 597.2 L445.0 592.9 L445.5 593.9 L446.0 597.6 L446.5 592.6 L447.0 595.2 L447.5 583.1 L448.0 588.9 L448.5 596.5 L449.0 597.8 L449.5 596.2 L450.0 594.7 L450.5 592.0 L451.0 597.7 L451.5 596.9 L452.0 596.1 L452.5 591.4 L453.0 597.9 L453.5 595.9 L454.0 597.3 L454.5 592.4 L455.0 583.8 L455.5 592.6 L456.0 597.4 L456.5 595.3 L457.0 585.4 L457.5 595.8 L458.0 596.7 L458.5 586.2 L459.0 597.0 L459.5 596.8 L460.0 597.0 L460.5 597.3 L461.0 516.5 L461.0 516.5 Z" fill="#a8cdf0"/>
<rect x="29.3" y="431" width="0.9" height="170" fill="#d8d8d8"/>
<line x1="196.8" y1="431" x2="196.8" y2="600" stroke="#e0e0e0" stroke-width="0.8" stroke-dasharray="1.5 1.5"/>
<line x1="240.5" y1="431" x2="240.5" y2="600" stroke="#e0e0e0" stroke-width="0.8" stroke-dasharray="1.5 1.5"/>
</svg>
<svg style="left:0;top:0" width="1" height="1"><rect x="12.5" y="613.5" width="9.6" height="9.3" fill="#3ab4e0"/><rect x="15.0" y="615.5" width="1.3" height="5.3" fill="#10304a"/><path d="M16.3 618.1 L19.8 615.5 L19.8 620.7Z" fill="#10304a"/><rect x="25.4" y="613.5" width="9.6" height="9.3" fill="#3ab4e0"/><g fill="#10304a"><rect x="27.4" y="615" width="6" height="1"/><rect x="27.4" y="618" width="6" height="1"/><rect x="27.4" y="621" width="6" height="1"/></g><rect x="38.3" y="613.5" width="9.6" height="9.3" fill="#8a8a8a"/><text x="43.1" y="621.6" font-size="8.3" font-weight="bold" font-family="Liberation Sans" fill="#e4e4e4" text-anchor="middle">1</text><rect x="51.2" y="613.5" width="9.6" height="9.3" fill="#8a8a8a"/><text x="56.0" y="621.6" font-size="8.3" font-weight="bold" font-family="Liberation Sans" fill="#e4e4e4" text-anchor="middle">2</text><rect x="64.1" y="613.5" width="9.6" height="9.3" fill="#8a8a8a"/><text x="68.9" y="621.6" font-size="8.3" font-weight="bold" font-family="Liberation Sans" fill="#e4e4e4" text-anchor="middle">3</text><rect x="77.0" y="613.5" width="9.6" height="9.3" fill="#8a8a8a"/><g fill="#3a3a3a"><rect x="79.0" y="615" width="6" height="1"/><rect x="79.0" y="618" width="6" height="1"/><rect x="79.0" y="621" width="6" height="1"/></g><rect x="241.0" y="613.5" width="9.6" height="9.3" fill="#3ab4e0"/><rect x="243.5" y="615.5" width="1.3" height="5.3" fill="#10304a"/><path d="M244.8 618.1 L248.3 615.5 L248.3 620.7Z" fill="#10304a"/><rect x="253.9" y="613.5" width="9.6" height="9.3" fill="#8a8a8a"/><g fill="#3a3a3a"><rect x="255.9" y="615" width="6" height="1"/><rect x="255.9" y="618" width="6" height="1"/><rect x="255.9" y="621" width="6" height="1"/></g><rect x="266.8" y="613.5" width="9.6" height="9.3" fill="#8a8a8a"/><text x="271.6" y="621.6" font-size="8.3" font-weight="bold" font-family="Liberation Sans" fill="#e4e4e4" text-anchor="middle">1</text><rect x="279.7" y="613.5" width="9.6" height="9.3" fill="#8a8a8a"/><text x="284.5" y="621.6" font-size="8.3" font-weight="bold" font-family="Liberation Sans" fill="#e4e4e4" text-anchor="middle">2</text><rect x="292.6" y="613.5" width="9.6" height="9.3" fill="#8a8a8a"/><text x="297.4" y="621.6" font-size="8.3" font-weight="bold" font-family="Liberation Sans" fill="#e4e4e4" text-anchor="middle">3</text><rect x="305.5" y="613.5" width="9.6" height="9.3" fill="#3ab4e0"/><g fill="#10304a"><rect x="307.5" y="615" width="6" height="1"/><rect x="307.5" y="618" width="6" height="1"/><rect x="307.5" y="621" width="6" height="1"/></g><circle cx="121.0" cy="618" r="14" fill="#303030" stroke="#686868" stroke-width="1.8"/><path d="M121.0 613.5 L114.2 620.5 L127.8 620.5Z" fill="#5e5e5e"/><rect x="114.2" y="621.8" width="13.5" height="1.8" fill="#5e5e5e"/><circle cx="154.0" cy="618" r="14" fill="#303030" stroke="#5aaac2" stroke-width="1.8"/><text x="154.0" y="622.2" font-size="9.6" font-weight="bold" font-family="Liberation Sans" fill="#50c8f0" text-anchor="middle" textLength="17.5" lengthAdjust="spacingAndGlyphs">CUE</text><circle cx="187.0" cy="618" r="14" fill="#303030" stroke="#b86a38" stroke-width="1.8"/><rect x="183.6" y="609.8" width="3.4" height="17.2" fill="#f47a10"/><rect x="187.4" y="609.8" width="3.4" height="17.2" fill="#f47a10"/><rect x="186.8" y="609.8" width="0.8" height="17.2" fill="#8a3a08"/><circle cx="221.0" cy="618" r="14" fill="#303030" stroke="#62a8ba" stroke-width="1.8"/><path d="M212.0 618 Q214.0 612 219.0 612.5 Q224.0 613 224.5 618 Q224.0 623 219.0 623.3 Q214.0 623.5 212.0 618Z" fill="#46c8f2"/><rect x="211.0" y="617.4" width="18" height="1.2" fill="#46c8f2"/><circle cx="350.6" cy="618" r="14" fill="#303030" stroke="#686868" stroke-width="1.8"/><path d="M350.6 613.5 L343.8 620.5 L357.4 620.5Z" fill="#5e5e5e"/><rect x="343.8" y="621.8" width="13.5" height="1.8" fill="#5e5e5e"/><circle cx="383.8" cy="618" r="14" fill="#303030" stroke="#5aaac2" stroke-width="1.8"/><text x="383.8" y="622.2" font-size="9.6" font-weight="bold" font-family="Liberation Sans" fill="#50c8f0" text-anchor="middle" textLength="17.5" lengthAdjust="spacingAndGlyphs">CUE</text><circle cx="417.5" cy="618" r="14" fill="#303030" stroke="#5aaac2" stroke-width="1.8"/><path d="M413.0 610.5 L424.5 618 L413.0 625.5Z" fill="#44c6f0"/><circle cx="450.8" cy="618" r="14" fill="#303030" stroke="#62a8ba" stroke-width="1.8"/><path d="M459.8 618 Q457.8 612 452.8 612.5 Q447.8 613 447.3 618 Q447.8 623 452.8 623.3 Q457.8 623.5 459.8 618Z" fill="#46c8f2"/><rect x="442.8" y="617.4" width="18" height="1.2" fill="#46c8f2"/></svg>
<div class="a" style="left:8px;top:633.5px;width:460px;height:1px;background:#383838"></div>
<div class="a" style="left:473px;top:163.5px;width:811.5px;height:472.7px;background:#29292b;border:2px solid #27486a"></div>
<svg style="left:0;top:0" width="1" height="1"><path d="M479.5 170 H484 L485.5 171.5 V178 H479.5Z" fill="#e8e8e8"/><path d="M481 174 L484 171.5 L484 176Z" fill="#555"/></svg>
<div class="t" style="left:489.50px;top:170.34px;font-size:7.60px;color:#cfcfcf;transform:scaleX(0.8798);transform-origin:0 0;">Playlist - donderdag 2 november 2023</div>
<div class="a" style="left:1232px;top:173.5px;width:4.5px;height:1.8px;background:#e0e0e0"></div>
<div class="a" style="left:1250.3px;top:170.8px;width:4.5px;height:4.5px;border:1px solid #e0e0e0;border-top-width:1.6px"></div>
<svg style="left:0;top:0" width="1" height="1"><g stroke="#dcdcdc" stroke-width="1.3"><line x1="1268" y1="171.7" x2="1272" y2="175.7"/><line x1="1272" y1="171.7" x2="1268" y2="175.7"/></g></svg>
<div class="a" style="left:559.5px;top:184.5px;width:710.5px;height:14.3px;background:#222222"></div>
<div class="a" style="left:559.5px;top:198.8px;width:710.5px;height:432.9px;background:#5e5e5e;overflow:hidden">
<div class="a" style="left:0;top:0.00px;width:710.5px;height:13.72px;background:linear-gradient(#6a6a6a,#686868)"></div><div class="a" style="left:0;top:13.62px;width:710.5px;height:13.72px;background:linear-gradient(#5f5f5f,#616161)"></div><div class="a" style="left:0;top:27.24px;width:710.5px;height:13.72px;background:linear-gradient(#6a6a6a,#686868)"></div><div class="a" style="left:0;top:40.86px;width:710.5px;height:13.72px;background:linear-gradient(#5f5f5f,#616161)"></div><div class="a" style="left:0;top:54.48px;width:710.5px;height:13.72px;background:linear-gradient(#6a6a6a,#686868)"></div><div class="a" style="left:0;top:68.10px;width:710.5px;height:13.72px;background:linear-gradient(#5f5f5f,#616161)"></div><div class="a" style="left:0;top:81.72px;width:710.5px;height:13.72px;background:linear-gradient(#6a6a6a,#686868)"></div><div class="a" style="left:0;top:95.34px;width:710.5px;height:13.72px;background:linear-gradient(#5f5f5f,#616161)"></div><div class="a" style="left:0;top:108.96px;width:710.5px;height:13.72px;background:linear-gradient(#6a6a6a,#686868)"></div><div class="a" style="left:0;top:122.58px;width:710.5px;height:13.72px;background:linear-gradient(#5f5f5f,#616161)"></div><div class="a" style="left:0;top:136.20px;width:710.5px;height:13.72px;background:linear-gradient(#6a6a6a,#686868)"></div><div class="a" style="left:0;top:149.82px;width:710.5px;height:13.72px;background:linear-gradient(#5f5f5f,#616161)"></div><div class="a" style="left:0;top:163.44px;width:710.5px;height:13.72px;background:linear-gradient(#6a6a6a,#686868)"></div><div class="a" style="left:0;top:177.06px;width:710.5px;height:13.72px;background:linear-gradient(#5f5f5f,#616161)"></div><div class="a" style="left:0;top:190.68px;width:710.5px;height:13.72px;background:linear-gradient(#6a6a6a,#686868)"></div><div class="a" style="left:0;top:204.30px;width:710.5px;height:13.72px;background:linear-gradient(#5f5f5f,#616161)"></div><div class="a" style="left:0;top:217.92px;width:710.5px;height:13.72px;background:linear-gradient(#6a6a6a,#686868)"></div><div class="a" style="left:0;top:231.54px;width:710.5px;height:13.72px;background:linear-gradient(#5f5f5f,#616161)"></div><div class="a" style="left:0;top:245.16px;width:710.5px;height:13.72px;background:linear-gradient(#6a6a6a,#686868)"></div><div class="a" style="left:0;top:258.78px;width:710.5px;height:13.72px;background:linear-gradient(#5f5f5f,#616161)"></div><div class="a" style="left:0;top:272.40px;width:710.5px;height:13.72px;background:linear-gradient(#6a6a6a,#686868)"></div><div class="a" style="left:0;top:286.02px;width:710.5px;height:13.72px;background:linear-gradient(#5f5f5f,#616161)"></div><div class="a" style="left:0;top:299.64px;width:710.5px;height:13.72px;background:linear-gradient(#6a6a6a,#686868)"></div><div class="a" style="left:0;top:313.26px;width:710.5px;height:13.72px;background:linear-gradient(#5f5f5f,#616161)"></div><div class="a" style="left:0;top:326.88px;width:710.5px;height:13.72px;background:linear-gradient(#6a6a6a,#686868)"></div><div class="a" style="left:0;top:340.50px;width:710.5px;height:13.72px;background:linear-gradient(#5f5f5f,#616161)"></div><div class="a" style="left:0;top:354.12px;width:710.5px;height:13.72px;background:linear-gradient(#6a6a6a,#686868)"></div><div class="a" style="left:0;top:367.74px;width:710.5px;height:13.72px;background:linear-gradient(#5f5f5f,#616161)"></div><div class="a" style="left:0;top:381.36px;width:710.5px;height:13.72px;background:linear-gradient(#6a6a6a,#686868)"></div><div class="a" style="left:0;top:394.98px;width:710.5px;height:13.72px;background:linear-gradient(#5f5f5f,#616161)"></div><div class="a" style="left:0;top:408.60px;width:710.5px;height:13.72px;background:linear-gradient(#6a6a6a,#686868)"></div><div class="a" style="left:0;top:422.22px;width:710.5px;height:13.72px;background:linear-gradient(#5f5f5f,#616161)"></div><div class="a" style="left:0;top:435.84px;width:710.5px;height:13.72px;background:linear-gradient(#6a6a6a,#686868)"></div>
</div>
<div class="a" style="left:581.7px;top:280.52px;width:688.3px;height:13.62px;background:#2ea0d0"></div>
<div class="a" style="left:649px;top:280.52px;width:1px;height:13.62px;background:#2a7aa0"></div>
<div class="a" style="left:1156.5px;top:280.52px;width:1px;height:13.62px;background:#2a80a8"></div>
<div class="a" style="left:1169.5px;top:280.52px;width:1px;height:13.62px;background:#2a80a8"></div>
<div class="t" style="left:561.80px;top:187.17px;font-size:9.60px;color:#f0f0f0;transform:scaleX(0.9865);transform-origin:0 0;">Start</div>
<div class="t" style="left:623.60px;top:187.17px;font-size:9.60px;color:#f0f0f0;transform:scaleX(1.0932);transform-origin:0 0;">Intro</div>
<div class="t" style="left:650.70px;top:187.17px;font-size:9.60px;color:#f0f0f0;transform:scaleX(0.9371);transform-origin:0 0;">Jaar</div>
<div class="t" style="left:677.40px;top:187.17px;font-size:9.60px;color:#f0f0f0;transform:scaleX(1.0092);transform-origin:0 0;">Duur</div>
<div class="t" style="left:704.00px;top:187.17px;font-size:9.60px;color:#f0f0f0;transform:scaleX(0.9561);transform-origin:0 0;">Titel</div>
<div class="t" style="left:999.20px;top:187.17px;font-size:9.60px;color:#f0f0f0;transform:scaleX(0.9740);transform-origin:0 0;">Artiest</div>
<div class="t" style="left:1170.50px;top:187.17px;font-size:9.60px;color:#f0f0f0;transform:scaleX(0.8172);transform-origin:0 0;">BPM</div>
<div class="a" style="left:1270px;top:184.5px;width:10px;height:447.2px;background:#3a3a3a"></div>
<div class="a" style="left:1272.3px;top:382px;width:4.5px;height:19px;background:#7a7a7a"></div>
<svg style="left:0;top:0" width="1" height="1"><path d="M1273 190 L1275 187.5 L1277 190Z" fill="#aaa"/><path d="M1273 626 L1275 628.5 L1277 626Z" fill="#aaa"/></svg>
<div class="a" style="left:559.5px;top:198.8px;width:710.5px;height:432.9px;overflow:hidden"><div class="t" style="left:24.10px;top:3.12px;font-size:9.50px;color:#28e028;transform:scaleX(1.0000);transform-origin:0 0;">11:00:00</div><div class="t" style="left:94.80px;top:3.12px;font-size:9.50px;color:#f2f2f2;transform:scaleX(0.9200);transform-origin:0 0;">2023</div><div class="t" style="left:116.70px;top:3.12px;font-size:9.50px;color:#28e028;transform:scaleX(1.0000);transform-origin:0 0;">00:11</div><div class="t" style="left:144.50px;top:3.12px;font-size:9.50px;color:#f38a2c;transform:scaleX(1.0000);transform-origin:0 0;">Mediatent TOTH 2023</div><div class="t" style="left:439.70px;top:3.12px;font-size:9.50px;color:#f38a2c;transform:scaleX(1.0000);transform-origin:0 0;">TOTH Sponsor</div><div class="t" style="left:24.10px;top:16.74px;font-size:9.50px;color:#f2f2f2;transform:scaleX(1.0000);transform-origin:0 0;">11:00:08</div><div class="t" style="left:94.80px;top:16.74px;font-size:9.50px;color:#f2f2f2;transform:scaleX(0.9200);transform-origin:0 0;">2023</div><div class="t" style="left:116.70px;top:16.74px;font-size:9.50px;color:#f2f2f2;transform:scaleX(1.0000);transform-origin:0 0;">00:28</div><div class="t" style="left:144.50px;top:16.74px;font-size:9.50px;color:#28e028;transform:scaleX(0.9400);transform-origin:0 0;">TOTH 2023</div><div class="t" style="left:439.70px;top:16.74px;font-size:9.50px;color:#28e028;transform:scaleX(0.9400);transform-origin:0 0;">NEW TOTH</div><div class="t" style="left:24.10px;top:30.36px;font-size:9.50px;color:#f2f2f2;transform:scaleX(1.0000);transform-origin:0 0;">11:00:28</div><div class="t" style="left:64.10px;top:30.36px;font-size:9.50px;color:#f2f2f2;transform:scaleX(1.0000);transform-origin:0 0;">00:14</div><div class="t" style="left:94.80px;top:30.36px;font-size:9.50px;color:#f2f2f2;transform:scaleX(0.9200);transform-origin:0 0;">2023</div><div class="t" style="left:116.70px;top:30.36px;font-size:9.50px;color:#f2f2f2;transform:scaleX(1.0000);transform-origin:0 0;">02:26</div><div class="t" style="left:144.50px;top:30.36px;font-size:9.50px;color:#e67ae9;transform:scaleX(1.0000);transform-origin:0 0;">Something On My Mind</div><div class="t" style="left:439.70px;top:30.36px;font-size:9.50px;color:#e67ae9;transform:scaleX(1.0000);transform-origin:0 0;">Purple Disco Machine, Duke Dumont</div><div class="t" style="left:24.10px;top:43.98px;font-size:9.50px;color:#f2f2f2;transform:scaleX(1.0000);transform-origin:0 0;">11:03:57</div><div class="t" style="left:64.10px;top:43.98px;font-size:9.50px;color:#f2f2f2;transform:scaleX(1.0000);transform-origin:0 0;">00:40</div><div class="t" style="left:94.80px;top:43.98px;font-size:9.50px;color:#f2f2f2;transform:scaleX(0.9200);transform-origin:0 0;">2018</div><div class="t" style="left:116.70px;top:43.98px;font-size:9.50px;color:#f2f2f2;transform:scaleX(1.0000);transform-origin:0 0;">07:52</div><div class="t" style="left:144.50px;top:43.98px;font-size:9.50px;color:#24cadc;transform:scaleX(1.0000);transform-origin:0 0;">Your Mind</div><div class="t" style="left:439.70px;top:43.98px;font-size:9.50px;color:#24cadc;transform:scaleX(1.0000);transform-origin:0 0;">Adam Beyer, Bart Skils</div><div class="t" style="left:24.10px;top:57.60px;font-size:9.50px;color:#f2f2f2;transform:scaleX(1.0000);transform-origin:0 0;">11:11:12</div><div class="t" style="left:94.80px;top:57.60px;font-size:9.50px;color:#f2f2f2;transform:scaleX(0.9200);transform-origin:0 0;">2023</div><div class="t" style="left:116.70px;top:57.60px;font-size:9.50px;color:#f2f2f2;transform:scaleX(1.0000);transform-origin:0 0;">00:00</div><div class="t" style="left:144.50px;top:57.60px;font-size:9.50px;color:#eeee22;transform:scaleX(0.9400);transform-origin:0 0;">STAR EXPLOSION SHOTGUN RAMP</div><div class="t" style="left:439.70px;top:57.60px;font-size:9.50px;color:#eeee22;transform:scaleX(0.9400);transform-origin:0 0;">DIT IS STAR</div><div class="t" style="left:24.10px;top:71.22px;font-size:9.50px;color:#f2f2f2;transform:scaleX(1.0000);transform-origin:0 0;">11:11:52</div><div class="t" style="left:64.10px;top:71.22px;font-size:9.50px;color:#f2f2f2;transform:scaleX(1.0000);transform-origin:0 0;">00:08</div><div class="t" style="left:94.80px;top:71.22px;font-size:9.50px;color:#f2f2f2;transform:scaleX(0.9200);transform-origin:0 0;">2011</div><div class="t" style="left:116.70px;top:71.22px;font-size:9.50px;color:#f2f2f2;transform:scaleX(1.0000);transform-origin:0 0;">02:51</div><div class="t" style="left:144.50px;top:71.22px;font-size:9.50px;color:#24cadc;transform:scaleX(1.0000);transform-origin:0 0;">Sunlight</div><div class="t" style="left:439.70px;top:71.22px;font-size:9.50px;color:#24cadc;transform:scaleX(1.0000);transform-origin:0 0;">DJ Antoine ft Tom Dice</div><div class="t" style="left:24.10px;top:84.84px;font-size:9.50px;color:#f2f2f2;transform:scaleX(1.0000);transform-origin:0 0;">11:14:42</div><div class="t" style="left:94.80px;top:84.84px;font-size:9.50px;color:#f2f2f2;transform:scaleX(0.9200);transform-origin:0 0;">2022</div><div class="t" style="left:116.70px;top:84.84px;font-size:9.50px;color:#f2f2f2;transform:scaleX(1.0000);transform-origin:0 0;">02:59</div><div class="t" style="left:144.50px;top:84.84px;font-size:9.50px;color:#d890f0;transform:scaleX(1.0000);transform-origin:0 0;">Sharks</div><div class="t" style="left:439.70px;top:84.84px;font-size:9.50px;color:#d890f0;transform:scaleX(1.0000);transform-origin:0 0;">Imagine Dragons</div><div class="t" style="left:24.10px;top:98.46px;font-size:9.50px;color:#f2f2f2;transform:scaleX(1.0000);transform-origin:0 0;">11:17:40</div><div class="t" style="left:64.10px;top:98.46px;font-size:9.50px;color:#f2f2f2;transform:scaleX(1.0000);transform-origin:0 0;">00:07</div><div class="t" style="left:94.80px;top:98.46px;font-size:9.50px;color:#f2f2f2;transform:scaleX(0.9200);transform-origin:0 0;">2018</div><div class="t" style="left:116.70px;top:98.46px;font-size:9.50px;color:#f2f2f2;transform:scaleX(1.0000);transform-origin:0 0;">03:34</div><div class="t" style="left:144.50px;top:98.46px;font-size:9.50px;color:#24cadc;transform:scaleX(1.0000);transform-origin:0 0;">Panic Room</div><div class="t" style="left:439.70px;top:98.46px;font-size:9.50px;color:#24cadc;transform:scaleX(1.0000);transform-origin:0 0;">Au/Ra, CamelPhat</div><div class="t" style="left:24.10px;top:112.08px;font-size:9.50px;color:#f2f2f2;transform:scaleX(1.0000);transform-origin:0 0;">11:21:10</div><div class="t" style="left:94.80px;top:112.08px;font-size:9.50px;color:#f2f2f2;transform:scaleX(0.9200);transform-origin:0 0;">2023</div><div class="t" style="left:116.70px;top:112.08px;font-size:9.50px;color:#f2f2f2;transform:scaleX(1.0000);transform-origin:0 0;">00:03</div><div class="t" style="left:144.50px;top:112.08px;font-size:9.50px;color:#eeee22;transform:scaleX(0.9400);transform-origin:0 0;">TELEMETRY SHOTGUN</div><div class="t" style="left:439.70px;top:112.08px;font-size:9.50px;color:#eeee22;transform:scaleX(0.9400);transform-origin:0 0;">DIT IS STAR</div><div class="t" style="left:24.10px;top:125.70px;font-size:9.50px;color:#f2f2f2;transform:scaleX(1.0000);transform-origin:0 0;">11:21:12</div><div class="t" style="left:64.10px;top:125.70px;font-size:9.50px;color:#f2f2f2;transform:scaleX(1.0000);transform-origin:0 0;">00:31</div><div class="t" style="left:94.80px;top:125.70px;font-size:9.50px;color:#f2f2f2;transform:scaleX(0.9200);transform-origin:0 0;">2006</div><div class="t" style="left:116.70px;top:125.70px;font-size:9.50px;color:#f2f2f2;transform:scaleX(1.0000);transform-origin:0 0;">04:40</div><div class="t" style="left:144.50px;top:125.70px;font-size:9.50px;color:#f2f2f2;transform:scaleX(1.0000);transform-origin:0 0;">What a feeling</div><div class="t" style="left:439.70px;top:125.70px;font-size:9.50px;color:#f2f2f2;transform:scaleX(1.0000);transform-origin:0 0;">Peter Luts</div><div class="t" style="left:24.10px;top:139.32px;font-size:9.50px;color:#f2f2f2;transform:scaleX(1.0000);transform-origin:0 0;">11:25:51</div><div class="t" style="left:64.10px;top:139.32px;font-size:9.50px;color:#f2f2f2;transform:scaleX(1.0000);transform-origin:0 0;">00:14</div><div class="t" style="left:94.80px;top:139.32px;font-size:9.50px;color:#f2f2f2;transform:scaleX(0.9200);transform-origin:0 0;">2022</div><div class="t" style="left:116.70px;top:139.32px;font-size:9.50px;color:#f2f2f2;transform:scaleX(1.0000);transform-origin:0 0;">02:48</div><div class="t" style="left:144.50px;top:139.32px;font-size:9.50px;color:#e67ae9;transform:scaleX(1.0000);transform-origin:0 0;">I cant wait</div><div class="t" style="left:439.70px;top:139.32px;font-size:9.50px;color:#e67ae9;transform:scaleX(1.0000);transform-origin:0 0;">Tiesto &amp; Solardo</div><div class="t" style="left:24.10px;top:152.94px;font-size:9.50px;color:#f2f2f2;transform:scaleX(1.0000);transform-origin:0 0;">11:28:39</div><div class="t" style="left:94.80px;top:152.94px;font-size:9.50px;color:#f2f2f2;transform:scaleX(0.9200);transform-origin:0 0;">2023</div><div class="t" style="left:116.70px;top:152.94px;font-size:9.50px;color:#f2f2f2;transform:scaleX(1.0000);transform-origin:0 0;">00:05</div><div class="t" style="left:144.50px;top:152.94px;font-size:9.50px;color:#eeee22;transform:scaleX(0.9400);transform-origin:0 0;">PUMP IT FREAKSHOT</div><div class="t" style="left:439.70px;top:152.94px;font-size:9.50px;color:#eeee22;transform:scaleX(0.9400);transform-origin:0 0;">DIT IS STAR</div><div class="t" style="left:24.10px;top:166.56px;font-size:9.50px;color:#f2f2f2;transform:scaleX(1.0000);transform-origin:0 0;">11:28:41</div><div class="t" style="left:94.80px;top:166.56px;font-size:9.50px;color:#f2f2f2;transform:scaleX(0.9200);transform-origin:0 0;">1995</div><div class="t" style="left:116.70px;top:166.56px;font-size:9.50px;color:#f2f2f2;transform:scaleX(1.0000);transform-origin:0 0;">03:57</div><div class="t" style="left:144.50px;top:166.56px;font-size:9.50px;color:#80aef0;transform:scaleX(1.0000);transform-origin:0 0;">Sexy Eyes</div><div class="t" style="left:439.70px;top:166.56px;font-size:9.50px;color:#80aef0;transform:scaleX(1.0000);transform-origin:0 0;">Whigfield</div><div class="t" style="left:24.10px;top:180.18px;font-size:9.50px;color:#f2f2f2;transform:scaleX(1.0000);transform-origin:0 0;">11:32:34</div><div class="t" style="left:94.80px;top:180.18px;font-size:9.50px;color:#f2f2f2;transform:scaleX(0.9200);transform-origin:0 0;">2023</div><div class="t" style="left:116.70px;top:180.18px;font-size:9.50px;color:#f2f2f2;transform:scaleX(1.0000);transform-origin:0 0;">00:36</div><div class="t" style="left:144.50px;top:180.18px;font-size:9.50px;color:#f2f2f2;font-weight:bold;transform:scaleX(0.9700);transform-origin:0 0;">Commercials</div><div class="t" style="left:24.10px;top:193.80px;font-size:9.50px;color:#f2f2f2;transform:scaleX(1.0000);transform-origin:0 0;">11:33:10</div><div class="t" style="left:64.10px;top:193.80px;font-size:9.50px;color:#f2f2f2;transform:scaleX(1.0000);transform-origin:0 0;">00:14</div><div class="t" style="left:94.80px;top:193.80px;font-size:9.50px;color:#f2f2f2;transform:scaleX(0.9200);transform-origin:0 0;">2004</div><div class="t" style="left:116.70px;top:193.80px;font-size:9.50px;color:#f2f2f2;transform:scaleX(1.0000);transform-origin:0 0;">03:24</div><div class="t" style="left:144.50px;top:193.80px;font-size:9.50px;color:#f2f2f2;transform:scaleX(1.0000);transform-origin:0 0;">Scared of yourself</div><div class="t" style="left:439.70px;top:193.80px;font-size:9.50px;color:#f2f2f2;transform:scaleX(1.0000);transform-origin:0 0;">Zornik</div><div class="t" style="left:24.10px;top:207.42px;font-size:9.50px;color:#f2f2f2;transform:scaleX(1.0000);transform-origin:0 0;">11:36:32</div><div class="t" style="left:64.10px;top:207.42px;font-size:9.50px;color:#f2f2f2;transform:scaleX(1.0000);transform-origin:0 0;">00:00</div><div class="t" style="left:94.80px;top:207.42px;font-size:9.50px;color:#f2f2f2;transform:scaleX(0.9200);transform-origin:0 0;">2023</div><div class="t" style="left:116.70px;top:207.42px;font-size:9.50px;color:#f2f2f2;transform:scaleX(1.0000);transform-origin:0 0;">02:10</div><div class="t" style="left:144.50px;top:207.42px;font-size:9.50px;color:#e67ae9;transform:scaleX(1.0000);transform-origin:0 0;">Little Things  Gypsy Woman Edit</div><div class="t" style="left:439.70px;top:207.42px;font-size:9.50px;color:#e67ae9;transform:scaleX(1.0000);transform-origin:0 0;">Jorja Smith</div><div class="t" style="left:24.10px;top:221.04px;font-size:9.50px;color:#f2f2f2;transform:scaleX(1.0000);transform-origin:0 0;">11:38:40</div><div class="t" style="left:94.80px;top:221.04px;font-size:9.50px;color:#f2f2f2;transform:scaleX(0.9200);transform-origin:0 0;">2023</div><div class="t" style="left:116.70px;top:221.04px;font-size:9.50px;color:#f2f2f2;transform:scaleX(1.0000);transform-origin:0 0;">00:05</div><div class="t" style="left:144.50px;top:221.04px;font-size:9.50px;color:#eeee22;transform:scaleX(0.9400);transform-origin:0 0;">LINER 03</div><div class="t" style="left:439.70px;top:221.04px;font-size:9.50px;color:#eeee22;transform:scaleX(0.9400);transform-origin:0 0;">POP &amp; DANCE, DIT IS STAR</div><div class="t" style="left:24.10px;top:234.66px;font-size:9.50px;color:#f2f2f2;transform:scaleX(1.0000);transform-origin:0 0;">11:38:43</div><div class="t" style="left:64.10px;top:234.66px;font-size:9.50px;color:#f2f2f2;transform:scaleX(1.0000);transform-origin:0 0;">00:07</div><div class="t" style="left:94.80px;top:234.66px;font-size:9.50px;color:#f2f2f2;transform:scaleX(0.9200);transform-origin:0 0;">2009</div><div class="t" style="left:116.70px;top:234.66px;font-size:9.50px;color:#f2f2f2;transform:scaleX(1.0000);transform-origin:0 0;">02:58</div><div class="t" style="left:144.50px;top:234.66px;font-size:9.50px;color:#24cadc;transform:scaleX(1.0000);transform-origin:0 0;">Mars</div><div class="t" style="left:439.70px;top:234.66px;font-size:9.50px;color:#24cadc;transform:scaleX(1.0000);transform-origin:0 0;">Fake Blood</div><div class="t" style="left:24.10px;top:248.28px;font-size:9.50px;color:#f2f2f2;transform:scaleX(1.0000);transform-origin:0 0;">11:41:39</div><div class="t" style="left:94.80px;top:248.28px;font-size:9.50px;color:#f2f2f2;transform:scaleX(0.9200);transform-origin:0 0;">2023</div><div class="t" style="left:116.70px;top:248.28px;font-size:9.50px;color:#f2f2f2;transform:scaleX(1.0000);transform-origin:0 0;">00:12</div><div class="t" style="left:144.50px;top:248.28px;font-size:9.50px;color:#f38a2c;transform:scaleX(1.0000);transform-origin:0 0;">Mediatent TOTH 2023</div><div class="t" style="left:439.70px;top:248.28px;font-size:9.50px;color:#f38a2c;transform:scaleX(1.0000);transform-origin:0 0;">TOTH Sponsor</div><div class="t" style="left:24.10px;top:261.90px;font-size:9.50px;color:#f2f2f2;transform:scaleX(1.0000);transform-origin:0 0;">11:41:47</div><div class="t" style="left:94.80px;top:261.90px;font-size:9.50px;color:#f2f2f2;transform:scaleX(0.9200);transform-origin:0 0;">2023</div><div class="t" style="left:116.70px;top:261.90px;font-size:9.50px;color:#f2f2f2;transform:scaleX(1.0000);transform-origin:0 0;">00:28</div><div class="t" style="left:144.50px;top:261.90px;font-size:9.50px;color:#28e028;transform:scaleX(0.9400);transform-origin:0 0;">TOTH 2023</div><div class="t" style="left:439.70px;top:261.90px;font-size:9.50px;color:#28e028;transform:scaleX(0.9400);transform-origin:0 0;">NEW TOTH</div><div class="t" style="left:24.10px;top:275.52px;font-size:9.50px;color:#f2f2f2;transform:scaleX(1.0000);transform-origin:0 0;">11:42:07</div><div class="t" style="left:64.10px;top:275.52px;font-size:9.50px;color:#f2f2f2;transform:scaleX(1.0000);transform-origin:0 0;">00:33</div><div class="t" style="left:94.80px;top:275.52px;font-size:9.50px;color:#f2f2f2;transform:scaleX(0.9200);transform-origin:0 0;">2023</div><div class="t" style="left:116.70px;top:275.52px;font-size:9.50px;color:#f2f2f2;transform:scaleX(1.0000);transform-origin:0 0;">03:19</div><div class="t" style="left:144.50px;top:275.52px;font-size:9.50px;color:#e67ae9;transform:scaleX(1.0000);transform-origin:0 0;">Makeba (Radio Edit)</div><div class="t" style="left:439.70px;top:275.52px;font-size:9.50px;color:#e67ae9;transform:scaleX(1.0000);transform-origin:0 0;">Jain</div><div class="t" style="left:24.10px;top:289.14px;font-size:9.50px;color:#f2f2f2;transform:scaleX(1.0000);transform-origin:0 0;">11:45:23</div><div class="t" style="left:64.10px;top:289.14px;font-size:9.50px;color:#f2f2f2;transform:scaleX(1.0000);transform-origin:0 0;">00:08</div><div class="t" style="left:94.80px;top:289.14px;font-size:9.50px;color:#f2f2f2;transform:scaleX(0.9200);transform-origin:0 0;">2023</div><div class="t" style="left:116.70px;top:289.14px;font-size:9.50px;color:#f2f2f2;transform:scaleX(1.0000);transform-origin:0 0;">03:12</div><div class="t" style="left:144.50px;top:289.14px;font-size:9.50px;color:#e67ae9;transform:scaleX(1.0000);transform-origin:0 0;">Paradise</div><div class="t" style="left:439.70px;top:289.14px;font-size:9.50px;color:#e67ae9;transform:scaleX(1.0000);transform-origin:0 0;">Sophie &amp; The Giants &amp; Purple Disc...</div><div class="t" style="left:24.10px;top:302.76px;font-size:9.50px;color:#f2f2f2;transform:scaleX(1.0000);transform-origin:0 0;">11:48:35</div><div class="t" style="left:64.10px;top:302.76px;font-size:9.50px;color:#f2f2f2;transform:scaleX(1.0000);transform-origin:0 0;">00:13</div><div class="t" style="left:94.80px;top:302.76px;font-size:9.50px;color:#f2f2f2;transform:scaleX(0.9200);transform-origin:0 0;">2021</div><div class="t" style="left:116.70px;top:302.76px;font-size:9.50px;color:#f2f2f2;transform:scaleX(1.0000);transform-origin:0 0;">03:06</div><div class="t" style="left:144.50px;top:302.76px;font-size:9.50px;color:#24cadc;transform:scaleX(1.0000);transform-origin:0 0;">Talamanca</div><div class="t" style="left:439.70px;top:302.76px;font-size:9.50px;color:#24cadc;transform:scaleX(0.9400);transform-origin:0 0;">BURNS</div><div class="t" style="left:24.10px;top:316.38px;font-size:9.50px;color:#f2f2f2;transform:scaleX(1.0000);transform-origin:0 0;">11:51:38</div><div class="t" style="left:94.80px;top:316.38px;font-size:9.50px;color:#f2f2f2;transform:scaleX(0.9200);transform-origin:0 0;">2023</div><div class="t" style="left:116.70px;top:316.38px;font-size:9.50px;color:#f2f2f2;transform:scaleX(1.0000);transform-origin:0 0;">00:05</div><div class="t" style="left:144.50px;top:316.38px;font-size:9.50px;color:#eeee22;transform:scaleX(0.9400);transform-origin:0 0;">TRANSMITTER TOWER SHOTGUN</div><div class="t" style="left:439.70px;top:316.38px;font-size:9.50px;color:#eeee22;transform:scaleX(0.9400);transform-origin:0 0;">DIT IS STAR</div><div class="t" style="left:24.10px;top:330.00px;font-size:9.50px;color:#f2f2f2;transform:scaleX(1.0000);transform-origin:0 0;">11:51:40</div><div class="t" style="left:94.80px;top:330.00px;font-size:9.50px;color:#f2f2f2;transform:scaleX(0.9200);transform-origin:0 0;">2018</div><div class="t" style="left:116.70px;top:330.00px;font-size:9.50px;color:#f2f2f2;transform:scaleX(1.0000);transform-origin:0 0;">03:00</div><div class="t" style="left:144.50px;top:330.00px;font-size:9.50px;color:#24cadc;transform:scaleX(1.0000);transform-origin:0 0;"> Whoomp (There It Is) (Mylomix)</div><div class="t" style="left:439.70px;top:330.00px;font-size:9.50px;color:#24cadc;transform:scaleX(1.0000);transform-origin:0 0;">Tag Team</div><div class="t" style="left:24.10px;top:343.62px;font-size:9.50px;color:#f2f2f2;transform:scaleX(1.0000);transform-origin:0 0;">11:54:41</div><div class="t" style="left:94.80px;top:343.62px;font-size:9.50px;color:#f2f2f2;transform:scaleX(0.9200);transform-origin:0 0;">2023</div><div class="t" style="left:116.70px;top:343.62px;font-size:9.50px;color:#f2f2f2;transform:scaleX(1.0000);transform-origin:0 0;">02:28</div><div class="t" style="left:144.50px;top:343.62px;font-size:9.50px;color:#e67ae9;transform:scaleX(1.0000);transform-origin:0 0;">Cry (Radio Edit)</div><div class="t" style="left:439.70px;top:343.62px;font-size:9.50px;color:#e67ae9;transform:scaleX(1.0000);transform-origin:0 0;">Nils van Zandt</div><div class="t" style="left:24.10px;top:357.24px;font-size:9.50px;color:#f2f2f2;transform:scaleX(1.0000);transform-origin:0 0;">11:57:08</div><div class="t" style="left:94.80px;top:357.24px;font-size:9.50px;color:#f2f2f2;transform:scaleX(0.9200);transform-origin:0 0;">2013</div><div class="t" style="left:116.70px;top:357.24px;font-size:9.50px;color:#f2f2f2;transform:scaleX(1.0000);transform-origin:0 0;">03:21</div><div class="t" style="left:144.50px;top:357.24px;font-size:9.50px;color:#24cadc;transform:scaleX(1.0000);transform-origin:0 0;">Dance! (VooDoo &amp; Serano Radio Edit)</div><div class="t" style="left:439.70px;top:357.24px;font-size:9.50px;color:#24cadc;transform:scaleX(1.0000);transform-origin:0 0;">Lumidee, Fatman Scoop</div><div class="t" style="left:24.10px;top:372.36px;font-size:9.50px;color:#f2f2f2;transform:scaleX(1.1537);transform-origin:0 0;">----------</div><div class="t" style="left:64.10px;top:370.86px;font-size:9.50px;color:#f2f2f2;transform:scaleX(1.0000);transform-origin:0 0;">00:00</div><div class="t" style="left:94.80px;top:370.86px;font-size:9.50px;color:#f2f2f2;transform:scaleX(0.9200);transform-origin:0 0;">2023</div><div class="t" style="left:116.70px;top:370.86px;font-size:9.50px;color:#f2f2f2;transform:scaleX(1.0000);transform-origin:0 0;">00:05</div><div class="t" style="left:144.50px;top:370.86px;font-size:9.50px;color:#eeee22;transform:scaleX(0.9400);transform-origin:0 0;">TRANSMITTER TOWER FREAKSHOT</div><div class="t" style="left:439.70px;top:370.86px;font-size:9.50px;color:#eeee22;transform:scaleX(0.9400);transform-origin:0 0;">DIT IS STAR</div><div class="t" style="left:24.10px;top:385.98px;font-size:9.50px;color:#f2f2f2;transform:scaleX(1.1537);transform-origin:0 0;">----------</div><div class="t" style="left:94.80px;top:384.48px;font-size:9.50px;color:#f2f2f2;transform:scaleX(0.9200);transform-origin:0 0;">2022</div><div class="t" style="left:116.70px;top:384.48px;font-size:9.50px;color:#f2f2f2;transform:scaleX(1.0000);transform-origin:0 0;">02:50</div><div class="t" style="left:144.50px;top:384.48px;font-size:9.50px;color:#e67ae9;transform:scaleX(0.9400);transform-origin:0 0;">MAMI</div><div class="t" style="left:439.70px;top:384.48px;font-size:9.50px;color:#e67ae9;transform:scaleX(1.0000);transform-origin:0 0;">Chris Lorenzo</div><div class="t" style="left:24.10px;top:399.60px;font-size:9.50px;color:#f2f2f2;transform:scaleX(1.1537);transform-origin:0 0;">----------</div><div class="t" style="left:94.80px;top:398.10px;font-size:9.50px;color:#f2f2f2;transform:scaleX(0.9200);transform-origin:0 0;">2007</div><div class="t" style="left:116.70px;top:398.10px;font-size:9.50px;color:#f2f2f2;transform:scaleX(1.0000);transform-origin:0 0;">03:53</div><div class="t" style="left:144.50px;top:398.10px;font-size:9.50px;color:#f2f2f2;transform:scaleX(1.0000);transform-origin:0 0;">She's Madonna (Dancemix)</div><div class="t" style="left:439.70px;top:398.10px;font-size:9.50px;color:#f2f2f2;transform:scaleX(1.0000);transform-origin:0 0;">Robbie Williams</div><div class="t" style="left:24.10px;top:411.72px;font-size:9.50px;color:#e6e630;transform:scaleX(1.0000);transform-origin:0 0;">12:00:28</div><div class="t" style="left:94.80px;top:411.72px;font-size:9.50px;color:#f2f2f2;transform:scaleX(0.9200);transform-origin:0 0;">2023</div><div class="t" style="left:116.70px;top:411.72px;font-size:9.50px;color:#e6e630;transform:scaleX(1.0000);transform-origin:0 0;">00:16</div><div class="t" style="left:144.50px;top:411.72px;font-size:9.50px;color:#f2f2f2;font-weight:bold;transform:scaleX(0.9700);transform-origin:0 0;">Commercials</div><div class="t" style="left:24.10px;top:425.34px;font-size:9.50px;color:#e6e630;transform:scaleX(1.0000);transform-origin:0 0;">12:00:45</div><div class="t" style="left:116.70px;top:425.34px;font-size:9.50px;color:#e6e630;transform:scaleX(1.0000);transform-origin:0 0;">02:08</div><div class="t" style="left:144.50px;top:425.34px;font-size:9.50px;color:#f2f2f2;transform:scaleX(1.0000);transform-origin:0 0;">Nieuws1</div><div class="t" style="left:439.70px;top:425.34px;font-size:9.50px;color:#f2f2f2;transform:scaleX(1.0000);transform-origin:0 0;">Nieuws1</div></div>
<svg style="left:0;top:0" width="1" height="1"><circle cx="565.2" cy="382.86" r="0.9" fill="#cfcfcf"/><circle cx="565.2" cy="614.40" r="0.9" fill="#cfcfcf"/><circle cx="575.6" cy="614.40" r="3.6" fill="#3aa8e0"/><path d="M573.8 614.60 L575.6 612.80 L577.4 614.60 M575.6 612.80 V616.40" stroke="#e0f4ff" stroke-width="0.9" fill="none"/></svg>
<div class="a" style="left:479px;top:197px;width:73px;height:139.5px;background:#262626;border:1px solid #3a3a3a"></div>
<div class="a" style="left:479px;top:185px;width:20px;height:12.5px;background:#262626;border:1px solid #3a3a3a;border-bottom:none"></div>
<div class="t" style="left:480.80px;top:188.80px;font-size:5.80px;color:#3a8ad0;transform:scaleX(0.8488);transform-origin:0 0;">Datum</div>
<div class="t" style="left:499.50px;top:188.50px;font-size:5.80px;color:#d8d8d8;transform:scaleX(0.8403);transform-origin:0 0;">Naam</div>
<svg style="left:0;top:0" width="1" height="1"><path d="M482.5 208 L485 206 L485 210Z" fill="#ddd"/><path d="M548 208 L545.5 206 L545.5 210Z" fill="#ddd"/><rect x="485.5" y="219.7" width="65" height="0.8" fill="#888"/><rect x="485.5" y="219.7" width="0.8" height="40" fill="#888"/><rect x="485.5" y="283.3" width="65" height="0.8" fill="#888"/><rect x="485.5" y="283.3" width="0.8" height="46" fill="#888"/><rect x="512.2" y="220.3" width="8" height="8" fill="#2a8ce0"/></svg>
<div class="t" style="left:496.00px;top:205.40px;font-size:5.80px;color:#cfcfcf;transform:scaleX(0.9428);transform-origin:0 0;">november 2023</div>
<div class="t" style="left:496.00px;top:268.40px;font-size:5.80px;color:#cfcfcf;transform:scaleX(0.9428);transform-origin:0 0;">december 2023</div>
<div class="t" style="left:488.05px;top:213.31px;font-size:6.20px;color:#bdbdbd;transform:scaleX(0.9500);transform-origin:0 0;">m</div><div class="t" style="left:497.56px;top:213.31px;font-size:6.20px;color:#bdbdbd;transform:scaleX(0.9500);transform-origin:0 0;">d</div><div class="t" style="left:505.77px;top:213.31px;font-size:6.20px;color:#bdbdbd;transform:scaleX(0.9500);transform-origin:0 0;">w</div><div class="t" style="left:514.96px;top:213.31px;font-size:6.20px;color:#bdbdbd;transform:scaleX(0.9500);transform-origin:0 0;">d</div><div class="t" style="left:523.83px;top:213.31px;font-size:6.20px;color:#bdbdbd;transform:scaleX(0.9500);transform-origin:0 0;">v</div><div class="t" style="left:532.53px;top:213.31px;font-size:6.20px;color:#bdbdbd;transform:scaleX(0.9500);transform-origin:0 0;">z</div><div class="t" style="left:541.23px;top:213.31px;font-size:6.20px;color:#bdbdbd;transform:scaleX(0.9500);transform-origin:0 0;">z</div><div class="t" style="left:487.22px;top:221.41px;font-size:6.20px;color:#666;transform:scaleX(0.9500);transform-origin:0 0;">30</div><div class="t" style="left:495.92px;top:221.41px;font-size:6.20px;color:#666;transform:scaleX(0.9500);transform-origin:0 0;">31</div><div class="t" style="left:506.26px;top:221.41px;font-size:6.20px;color:#e0e0e0;transform:scaleX(0.9500);transform-origin:0 0;">1</div><div class="t" style="left:514.96px;top:221.41px;font-size:6.20px;color:#e0e0e0;transform:scaleX(0.9500);transform-origin:0 0;">2</div><div class="t" style="left:523.66px;top:221.41px;font-size:6.20px;color:#e0e0e0;transform:scaleX(0.9500);transform-origin:0 0;">3</div><div class="t" style="left:532.36px;top:221.41px;font-size:6.20px;color:#e0e0e0;transform:scaleX(0.9500);transform-origin:0 0;">4</div><div class="t" style="left:541.06px;top:221.41px;font-size:6.20px;color:#e0e0e0;transform:scaleX(0.9500);transform-origin:0 0;">5</div><div class="t" style="left:488.86px;top:229.06px;font-size:6.20px;color:#e0e0e0;transform:scaleX(0.9500);transform-origin:0 0;">6</div><div class="t" style="left:497.56px;top:229.06px;font-size:6.20px;color:#e0e0e0;transform:scaleX(0.9500);transform-origin:0 0;">7</div><div class="t" style="left:506.26px;top:229.06px;font-size:6.20px;color:#e0e0e0;transform:scaleX(0.9500);transform-origin:0 0;">8</div><div class="t" style="left:514.96px;top:229.06px;font-size:6.20px;color:#e0e0e0;transform:scaleX(0.9500);transform-origin:0 0;">9</div><div class="t" style="left:522.02px;top:229.06px;font-size:6.20px;color:#e0e0e0;transform:scaleX(0.9500);transform-origin:0 0;">10</div><div class="t" style="left:530.94px;top:229.06px;font-size:6.20px;color:#e0e0e0;transform:scaleX(0.9500);transform-origin:0 0;">11</div><div class="t" style="left:539.42px;top:229.06px;font-size:6.20px;color:#e0e0e0;transform:scaleX(0.9500);transform-origin:0 0;">12</div><div class="t" style="left:487.22px;top:236.71px;font-size:6.20px;color:#e0e0e0;transform:scaleX(0.9500);transform-origin:0 0;">13</div><div class="t" style="left:495.92px;top:236.71px;font-size:6.20px;color:#e0e0e0;transform:scaleX(0.9500);transform-origin:0 0;">14</div><div class="t" style="left:504.62px;top:236.71px;font-size:6.20px;color:#e0e0e0;transform:scaleX(0.9500);transform-origin:0 0;">15</div><div class="t" style="left:513.32px;top:236.71px;font-size:6.20px;color:#e0e0e0;transform:scaleX(0.9500);transform-origin:0 0;">16</div><div class="t" style="left:522.02px;top:236.71px;font-size:6.20px;color:#e0e0e0;transform:scaleX(0.9500);transform-origin:0 0;">17</div><div class="t" style="left:530.72px;top:236.71px;font-size:6.20px;color:#e0e0e0;transform:scaleX(0.9500);transform-origin:0 0;">18</div><div class="t" style="left:539.42px;top:236.71px;font-size:6.20px;color:#e0e0e0;transform:scaleX(0.9500);transform-origin:0 0;">19</div><div class="t" style="left:487.22px;top:244.36px;font-size:6.20px;color:#e0e0e0;transform:scaleX(0.9500);transform-origin:0 0;">20</div><div class="t" style="left:495.92px;top:244.36px;font-size:6.20px;color:#e0e0e0;transform:scaleX(0.9500);transform-origin:0 0;">21</div><div class="t" style="left:504.62px;top:244.36px;font-size:6.20px;color:#e0e0e0;transform:scaleX(0.9500);transform-origin:0 0;">22</div><div class="t" style="left:513.32px;top:244.36px;font-size:6.20px;color:#e0e0e0;transform:scaleX(0.9500);transform-origin:0 0;">23</div><div class="t" style="left:522.02px;top:244.36px;font-size:6.20px;color:#e0e0e0;transform:scaleX(0.9500);transform-origin:0 0;">24</div><div class="t" style="left:530.72px;top:244.36px;font-size:6.20px;color:#e0e0e0;transform:scaleX(0.9500);transform-origin:0 0;">25</div><div class="t" style="left:539.42px;top:244.36px;font-size:6.20px;color:#e0e0e0;transform:scaleX(0.9500);transform-origin:0 0;">26</div><div class="t" style="left:487.22px;top:252.01px;font-size:6.20px;color:#e0e0e0;transform:scaleX(0.9500);transform-origin:0 0;">27</div><div class="t" style="left:495.92px;top:252.01px;font-size:6.20px;color:#e0e0e0;transform:scaleX(0.9500);transform-origin:0 0;">28</div><div class="t" style="left:504.62px;top:252.01px;font-size:6.20px;color:#e0e0e0;transform:scaleX(0.9500);transform-origin:0 0;">29</div><div class="t" style="left:513.32px;top:252.01px;font-size:6.20px;color:#e0e0e0;transform:scaleX(0.9500);transform-origin:0 0;">30</div><div class="t" style="left:488.05px;top:276.31px;font-size:6.20px;color:#bdbdbd;transform:scaleX(0.9500);transform-origin:0 0;">m</div><div class="t" style="left:497.56px;top:276.31px;font-size:6.20px;color:#bdbdbd;transform:scaleX(0.9500);transform-origin:0 0;">d</div><div class="t" style="left:505.77px;top:276.31px;font-size:6.20px;color:#bdbdbd;transform:scaleX(0.9500);transform-origin:0 0;">w</div><div class="t" style="left:514.96px;top:276.31px;font-size:6.20px;color:#bdbdbd;transform:scaleX(0.9500);transform-origin:0 0;">d</div><div class="t" style="left:523.83px;top:276.31px;font-size:6.20px;color:#bdbdbd;transform:scaleX(0.9500);transform-origin:0 0;">v</div><div class="t" style="left:532.53px;top:276.31px;font-size:6.20px;color:#bdbdbd;transform:scaleX(0.9500);transform-origin:0 0;">z</div><div class="t" style="left:541.23px;top:276.31px;font-size:6.20px;color:#bdbdbd;transform:scaleX(0.9500);transform-origin:0 0;">z</div><div class="t" style="left:523.66px;top:285.01px;font-size:6.20px;color:#e0e0e0;transform:scaleX(0.9500);transform-origin:0 0;">1</div><div class="t" style="left:532.36px;top:285.01px;font-size:6.20px;color:#e0e0e0;transform:scaleX(0.9500);transform-origin:0 0;">2</div><div class="t" style="left:541.06px;top:285.01px;font-size:6.20px;color:#e0e0e0;transform:scaleX(0.9500);transform-origin:0 0;">3</div><div class="t" style="left:488.86px;top:292.53px;font-size:6.20px;color:#e0e0e0;transform:scaleX(0.9500);transform-origin:0 0;">4</div><div class="t" style="left:497.56px;top:292.53px;font-size:6.20px;color:#e0e0e0;transform:scaleX(0.9500);transform-origin:0 0;">5</div><div class="t" style="left:506.26px;top:292.53px;font-size:6.20px;color:#e0e0e0;transform:scaleX(0.9500);transform-origin:0 0;">6</div><div class="t" style="left:514.96px;top:292.53px;font-size:6.20px;color:#e0e0e0;transform:scaleX(0.9500);transform-origin:0 0;">7</div><div class="t" style="left:523.66px;top:292.53px;font-size:6.20px;color:#e0e0e0;transform:scaleX(0.9500);transform-origin:0 0;">8</div><div class="t" style="left:532.36px;top:292.53px;font-size:6.20px;color:#e0e0e0;transform:scaleX(0.9500);transform-origin:0 0;">9</div><div class="t" style="left:539.42px;top:292.53px;font-size:6.20px;color:#e0e0e0;transform:scaleX(0.9500);transform-origin:0 0;">10</div><div class="t" style="left:487.44px;top:300.05px;font-size:6.20px;color:#e0e0e0;transform:scaleX(0.9500);transform-origin:0 0;">11</div><div class="t" style="left:495.92px;top:300.05px;font-size:6.20px;color:#e0e0e0;transform:scaleX(0.9500);transform-origin:0 0;">12</div><div class="t" style="left:504.62px;top:300.05px;font-size:6.20px;color:#e0e0e0;transform:scaleX(0.9500);transform-origin:0 0;">13</div><div class="t" style="left:513.32px;top:300.05px;font-size:6.20px;color:#e0e0e0;transform:scaleX(0.9500);transform-origin:0 0;">14</div><div class="t" style="left:522.02px;top:300.05px;font-size:6.20px;color:#e0e0e0;transform:scaleX(0.9500);transform-origin:0 0;">15</div><div class="t" style="left:530.72px;top:300.05px;font-size:6.20px;color:#e0e0e0;transform:scaleX(0.9500);transform-origin:0 0;">16</div><div class="t" style="left:539.42px;top:300.05px;font-size:6.20px;color:#e0e0e0;transform:scaleX(0.9500);transform-origin:0 0;">17</div><div class="t" style="left:487.22px;top:307.57px;font-size:6.20px;color:#e0e0e0;transform:scaleX(0.9500);transform-origin:0 0;">18</div><div class="t" style="left:495.92px;top:307.57px;font-size:6.20px;color:#e0e0e0;transform:scaleX(0.9500);transform-origin:0 0;">19</div><div class="t" style="left:504.62px;top:307.57px;font-size:6.20px;color:#e0e0e0;transform:scaleX(0.9500);transform-origin:0 0;">20</div><div class="t" style="left:513.32px;top:307.57px;font-size:6.20px;color:#e0e0e0;transform:scaleX(0.9500);transform-origin:0 0;">21</div><div class="t" style="left:522.02px;top:307.57px;font-size:6.20px;color:#e0e0e0;transform:scaleX(0.9500);transform-origin:0 0;">22</div><div class="t" style="left:530.72px;top:307.57px;font-size:6.20px;color:#e0e0e0;transform:scaleX(0.9500);transform-origin:0 0;">23</div><div class="t" style="left:539.42px;top:307.57px;font-size:6.20px;color:#e0e0e0;transform:scaleX(0.9500);transform-origin:0 0;">24</div><div class="t" style="left:487.22px;top:315.09px;font-size:6.20px;color:#e0e0e0;transform:scaleX(0.9500);transform-origin:0 0;">25</div><div class="t" style="left:495.92px;top:315.09px;font-size:6.20px;color:#e0e0e0;transform:scaleX(0.9500);transform-origin:0 0;">26</div><div class="t" style="left:504.62px;top:315.09px;font-size:6.20px;color:#e0e0e0;transform:scaleX(0.9500);transform-origin:0 0;">27</div><div class="t" style="left:513.32px;top:315.09px;font-size:6.20px;color:#e0e0e0;transform:scaleX(0.9500);transform-origin:0 0;">28</div><div class="t" style="left:522.02px;top:315.09px;font-size:6.20px;color:#e0e0e0;transform:scaleX(0.9500);transform-origin:0 0;">29</div><div class="t" style="left:530.72px;top:315.09px;font-size:6.20px;color:#e0e0e0;transform:scaleX(0.9500);transform-origin:0 0;">30</div><div class="t" style="left:539.42px;top:315.09px;font-size:6.20px;color:#e0e0e0;transform:scaleX(0.9500);transform-origin:0 0;">31</div><div class="t" style="left:488.86px;top:322.61px;font-size:6.20px;color:#555;transform:scaleX(0.9500);transform-origin:0 0;">1</div><div class="t" style="left:497.56px;top:322.61px;font-size:6.20px;color:#555;transform:scaleX(0.9500);transform-origin:0 0;">2</div><div class="t" style="left:506.26px;top:322.61px;font-size:6.20px;color:#555;transform:scaleX(0.9500);transform-origin:0 0;">3</div><div class="t" style="left:514.96px;top:322.61px;font-size:6.20px;color:#555;transform:scaleX(0.9500);transform-origin:0 0;">4</div><div class="t" style="left:523.66px;top:322.61px;font-size:6.20px;color:#555;transform:scaleX(0.9500);transform-origin:0 0;">5</div><div class="t" style="left:532.36px;top:322.61px;font-size:6.20px;color:#555;transform:scaleX(0.9500);transform-origin:0 0;">6</div><div class="t" style="left:541.06px;top:322.61px;font-size:6.20px;color:#555;transform:scaleX(0.9500);transform-origin:0 0;">7</div><div class="t" style="left:481.30px;top:222.71px;font-size:3.50px;color:#8a8a8a;transform:scaleX(0.8990);transform-origin:0 0;">44</div><div class="t" style="left:481.30px;top:230.36px;font-size:3.50px;color:#8a8a8a;transform:scaleX(0.8990);transform-origin:0 0;">45</div><div class="t" style="left:481.30px;top:238.01px;font-size:3.50px;color:#8a8a8a;transform:scaleX(0.8990);transform-origin:0 0;">46</div><div class="t" style="left:481.30px;top:245.66px;font-size:3.50px;color:#8a8a8a;transform:scaleX(0.8990);transform-origin:0 0;">47</div><div class="t" style="left:481.30px;top:253.31px;font-size:3.50px;color:#8a8a8a;transform:scaleX(0.8990);transform-origin:0 0;">48</div><div class="t" style="left:481.30px;top:286.31px;font-size:3.50px;color:#8a8a8a;transform:scaleX(0.8990);transform-origin:0 0;">48</div><div class="t" style="left:481.30px;top:293.83px;font-size:3.50px;color:#8a8a8a;transform:scaleX(0.8990);transform-origin:0 0;">49</div><div class="t" style="left:481.30px;top:301.35px;font-size:3.50px;color:#8a8a8a;transform:scaleX(0.8990);transform-origin:0 0;">50</div><div class="t" style="left:481.30px;top:308.87px;font-size:3.50px;color:#8a8a8a;transform:scaleX(0.8990);transform-origin:0 0;">51</div><div class="t" style="left:481.30px;top:316.39px;font-size:3.50px;color:#8a8a8a;transform:scaleX(0.8990);transform-origin:0 0;">52</div><div class="t" style="left:481.30px;top:323.91px;font-size:3.50px;color:#8a8a8a;transform:scaleX(1.7981);transform-origin:0 0;">1</div>
<div class="a" style="left:478px;top:339px;width:74px;height:291.5px;background:#262626;border:1px solid #3a3a3a"></div>
<svg style="left:0;top:0" width="1" height="1"><path d="M483 349 L484.5 350.8 L487.5 346.8" stroke="#ccc" stroke-width="0.8" fill="none"/></svg>
<div class="t" style="left:491.00px;top:346.40px;font-size:5.40px;color:#d8d8d8;transform:scaleX(0.9994);transform-origin:0 0;">Alle blokken weergeven</div>
<div class="a" style="left:480.20px;top:355.00px;width:17.3px;height:8.6px;background:#351c37"></div><div class="t" style="left:481.50px;top:357.50px;font-size:5.60px;color:#e8c8ea;transform:scaleX(1.0418);transform-origin:0 0;">00:00</div><div class="a" style="left:498.05px;top:355.00px;width:17.3px;height:8.6px;background:#351c37"></div><div class="t" style="left:499.35px;top:357.50px;font-size:5.60px;color:#e8c8ea;transform:scaleX(1.0418);transform-origin:0 0;">01:00</div><div class="a" style="left:515.90px;top:355.00px;width:17.3px;height:8.6px;background:#351c37"></div><div class="t" style="left:517.20px;top:357.50px;font-size:5.60px;color:#e8c8ea;transform:scaleX(1.0418);transform-origin:0 0;">02:00</div><div class="a" style="left:533.75px;top:355.00px;width:17.3px;height:8.6px;background:#351c37"></div><div class="t" style="left:535.05px;top:357.50px;font-size:5.60px;color:#e8c8ea;transform:scaleX(1.0418);transform-origin:0 0;">03:00</div><div class="a" style="left:480.20px;top:364.10px;width:17.3px;height:8.6px;background:#1c341f"></div><div class="t" style="left:481.50px;top:366.60px;font-size:5.60px;color:#cfe8d0;transform:scaleX(1.0418);transform-origin:0 0;">04:00</div><div class="a" style="left:498.05px;top:364.10px;width:17.3px;height:8.6px;background:#1c341f"></div><div class="t" style="left:499.35px;top:366.60px;font-size:5.60px;color:#cfe8d0;transform:scaleX(1.0418);transform-origin:0 0;">05:00</div><div class="a" style="left:515.90px;top:364.10px;width:17.3px;height:8.6px;background:#1c341f"></div><div class="t" style="left:517.20px;top:366.60px;font-size:5.60px;color:#cfe8d0;transform:scaleX(1.0418);transform-origin:0 0;">06:00</div><div class="a" style="left:533.75px;top:364.10px;width:17.3px;height:8.6px;background:#1c341f"></div><div class="t" style="left:535.05px;top:366.60px;font-size:5.60px;color:#cfe8d0;transform:scaleX(1.0418);transform-origin:0 0;">07:00</div><div class="a" style="left:480.20px;top:373.20px;width:17.3px;height:8.6px;background:#351c37"></div><div class="t" style="left:481.50px;top:375.70px;font-size:5.60px;color:#e8c8ea;transform:scaleX(1.0418);transform-origin:0 0;">08:00</div><div class="a" style="left:498.05px;top:373.20px;width:17.3px;height:8.6px;background:#351c37"></div><div class="t" style="left:499.35px;top:375.70px;font-size:5.60px;color:#e8c8ea;transform:scaleX(1.0418);transform-origin:0 0;">09:00</div><div class="a" style="left:515.90px;top:373.20px;width:17.3px;height:8.6px;background:#351c37"></div><div class="t" style="left:517.20px;top:375.70px;font-size:5.60px;color:#e8c8ea;transform:scaleX(1.0418);transform-origin:0 0;">10:00</div><div class="a" style="left:533.75px;top:373.20px;width:17.3px;height:8.6px;background:#351c37"></div><div class="t" style="left:535.05px;top:375.70px;font-size:5.60px;color:#e8c8ea;transform:scaleX(1.0737);transform-origin:0 0;">11:00</div><div class="a" style="left:480.20px;top:382.30px;width:17.3px;height:8.6px;background:#1c341f"></div><div class="t" style="left:481.50px;top:384.80px;font-size:5.60px;color:#cfe8d0;transform:scaleX(1.0418);transform-origin:0 0;">12:00</div><div class="a" style="left:498.05px;top:382.30px;width:17.3px;height:8.6px;background:#1c341f"></div><div class="t" style="left:499.35px;top:384.80px;font-size:5.60px;color:#cfe8d0;transform:scaleX(1.0418);transform-origin:0 0;">13:00</div><div class="a" style="left:515.90px;top:382.30px;width:17.3px;height:8.6px;background:#1c341f"></div><div class="t" style="left:517.20px;top:384.80px;font-size:5.60px;color:#cfe8d0;transform:scaleX(1.0418);transform-origin:0 0;">14:00</div><div class="a" style="left:533.75px;top:382.30px;width:17.3px;height:8.6px;background:#1c341f"></div><div class="t" style="left:535.05px;top:384.80px;font-size:5.60px;color:#cfe8d0;transform:scaleX(1.0418);transform-origin:0 0;">15:00</div><div class="a" style="left:480.20px;top:391.40px;width:17.3px;height:8.6px;background:#351c37"></div><div class="t" style="left:481.50px;top:393.90px;font-size:5.60px;color:#e8c8ea;transform:scaleX(1.0418);transform-origin:0 0;">16:00</div><div class="a" style="left:498.05px;top:391.40px;width:17.3px;height:8.6px;background:#351c37"></div><div class="t" style="left:499.35px;top:393.90px;font-size:5.60px;color:#e8c8ea;transform:scaleX(1.0418);transform-origin:0 0;">17:00</div><div class="a" style="left:515.90px;top:391.40px;width:17.3px;height:8.6px;background:#351c37"></div><div class="t" style="left:517.20px;top:393.90px;font-size:5.60px;color:#e8c8ea;transform:scaleX(1.0418);transform-origin:0 0;">18:00</div><div class="a" style="left:533.75px;top:391.40px;width:17.3px;height:8.6px;background:#351c37"></div><div class="t" style="left:535.05px;top:393.90px;font-size:5.60px;color:#e8c8ea;transform:scaleX(1.0418);transform-origin:0 0;">19:00</div><div class="a" style="left:480.20px;top:400.50px;width:17.3px;height:8.6px;background:#1c341f"></div><div class="t" style="left:481.50px;top:403.00px;font-size:5.60px;color:#cfe8d0;transform:scaleX(1.0418);transform-origin:0 0;">20:00</div><div class="a" style="left:498.05px;top:400.50px;width:17.3px;height:8.6px;background:#1c341f"></div><div class="t" style="left:499.35px;top:403.00px;font-size:5.60px;color:#cfe8d0;transform:scaleX(1.0418);transform-origin:0 0;">21:00</div><div class="a" style="left:515.90px;top:400.50px;width:17.3px;height:8.6px;background:#1c341f"></div><div class="t" style="left:517.20px;top:403.00px;font-size:5.60px;color:#cfe8d0;transform:scaleX(1.0418);transform-origin:0 0;">22:00</div><div class="a" style="left:533.75px;top:400.50px;width:17.3px;height:8.6px;background:#1c341f"></div><div class="t" style="left:535.05px;top:403.00px;font-size:5.60px;color:#cfe8d0;transform:scaleX(1.0418);transform-origin:0 0;">23:00</div>
<div class="a" style="left:3px;top:636px;width:1294px;height:37px;background:#2a2a2a"></div>
<div class="a" style="left:7px;top:644.5px;width:79px;height:11.5px;background:#2e2e2e;border:1px solid #3a3a3a"></div><div class="t" style="left:17.00px;top:647.21px;font-size:6.20px;color:#5a5a5a;transform:scaleX(0.9817);transform-origin:0 0;">Mix ed...</div><div class="a" style="left:88px;top:644.5px;width:79px;height:11.5px;background:#2e2e2e;border:1px solid #3a3a3a"></div><div class="t" style="left:98.00px;top:647.21px;font-size:6.20px;color:#5a5a5a;transform:scaleX(0.7830);transform-origin:0 0;">Datab...</div><div class="a" style="left:169px;top:644.5px;width:79px;height:11.5px;background:#2e2e2e;border:1px solid #3a3a3a"></div><div class="t" style="left:179.00px;top:647.21px;font-size:6.20px;color:#5a5a5a;transform:scaleX(0.7772);transform-origin:0 0;">Jingles</div>
<svg style="left:0;top:0" width="1" height="1"><rect x="10" y="646.5" width="6" height="7" fill="#5a6470"/><rect x="89.5" y="646" width="5.5" height="8" fill="#e6c060"/><path d="M173 647 V653 M173 647 L176 646.5" stroke="#555" stroke-width="0.9" fill="none"/><rect x="50.5" y="648.5" width="3.6" height="3.2" fill="none" stroke="#e0e0e0" stroke-width="0.9"/><path d="M51.7 648.5 V647.3 H55.5 V650.5 H54.2" fill="none" stroke="#e0e0e0" stroke-width="0.9"/><rect x="63.5" y="647.8" width="5" height="4.8" fill="none" stroke="#e0e0e0" stroke-width="1"/><g stroke="#e8e8e8" stroke-width="1.1"><line x1="75.7" y1="648" x2="80.0" y2="652.3"/><line x1="80.0" y1="648" x2="75.7" y2="652.3"/></g><rect x="131.5" y="648.5" width="3.6" height="3.2" fill="none" stroke="#e0e0e0" stroke-width="0.9"/><path d="M132.7 648.5 V647.3 H136.5 V650.5 H135.2" fill="none" stroke="#e0e0e0" stroke-width="0.9"/><rect x="144.5" y="647.8" width="5" height="4.8" fill="none" stroke="#e0e0e0" stroke-width="1"/><g stroke="#e8e8e8" stroke-width="1.1"><line x1="156.7" y1="648" x2="161.0" y2="652.3"/><line x1="161.0" y1="648" x2="156.7" y2="652.3"/></g><rect x="212.5" y="648.5" width="3.6" height="3.2" fill="none" stroke="#e0e0e0" stroke-width="0.9"/><path d="M213.7 648.5 V647.3 H217.5 V650.5 H216.2" fill="none" stroke="#e0e0e0" stroke-width="0.9"/><rect x="225.5" y="647.8" width="5" height="4.8" fill="none" stroke="#e0e0e0" stroke-width="1"/><g stroke="#e8e8e8" stroke-width="1.1"><line x1="237.7" y1="648" x2="242.0" y2="652.3"/><line x1="242.0" y1="648" x2="237.7" y2="652.3"/></g><rect x="6" y="662" width="5" height="6" fill="#0a0a0a"/><circle cx="24.5" cy="664.3" r="1.6" fill="#f0c060"/><path d="M21.5 668.8 Q24.5 664.5 27.5 668.8Z" fill="#3a9a3a"/><rect x="77" y="662" width="5.5" height="6.5" fill="#3aa8e0"/><path d="M153 665.5 L154.5 667.3 L157 663.6" stroke="#aaa" stroke-width="0.8" fill="none"/></svg>
<div class="t" style="left:33.00px;top:662.51px;font-size:6.20px;color:#d8d8d8;transform:scaleX(1.0011);transform-origin:0 0;">Tommy</div>
<div class="t" style="left:78.30px;top:662.89px;font-size:5.00px;color:#e8f8ff;transform:scaleX(1.0788);transform-origin:0 0;">1</div>
<div class="t" style="left:90.00px;top:662.89px;font-size:5.00px;color:#4a4a4a;transform:scaleX(1.0788);transform-origin:0 0;">2</div>
<div class="t" style="left:101.50px;top:662.89px;font-size:5.00px;color:#4a4a4a;transform:scaleX(1.2000);transform-origin:0 0;">J</div>
<div class="t" style="left:113.00px;top:662.89px;font-size:5.00px;color:#4a4a4a;transform:scaleX(0.8996);transform-origin:0 0;">P</div>
<div class="t" style="left:128.50px;top:662.89px;font-size:5.00px;color:#4a4a4a;transform:scaleX(0.8996);transform-origin:0 0;">E</div>
<div class="t" style="left:140.00px;top:662.89px;font-size:5.00px;color:#4a4a4a;transform:scaleX(0.7203);transform-origin:0 0;">M</div>
<div class="t" style="left:163.00px;top:662.51px;font-size:6.20px;color:#d8d8d8;transform:scaleX(0.9640);transform-origin:0 0;">Toevoegen databank</div>
<div class="a" style="left:374px;top:661px;width:94.5px;height:9.5px;background:#222;border:1px solid #363636"></div>
<div class="a" style="left:3px;top:657.5px;width:1294px;height:1px;background:#303030"></div>
<div class="a" style="left:7px;top:638px;width:463px;height:1px;background:#363636"></div>
<svg style="left:0;top:0" width="1" height="1">
<path d="M1178.9 701.5 A41 41 0 0 1 1243.1 701.5" fill="none" stroke="#a4daf2" stroke-width="7.5"/>
<path d="M1195 709.3 A23.85 23.85 0 0 1 1227 709.3" fill="none" stroke="#a4daf2" stroke-width="7.5"/>
<circle cx="1211" cy="729" r="8" fill="#bdbdbd"/>
</svg>
</body></html>
